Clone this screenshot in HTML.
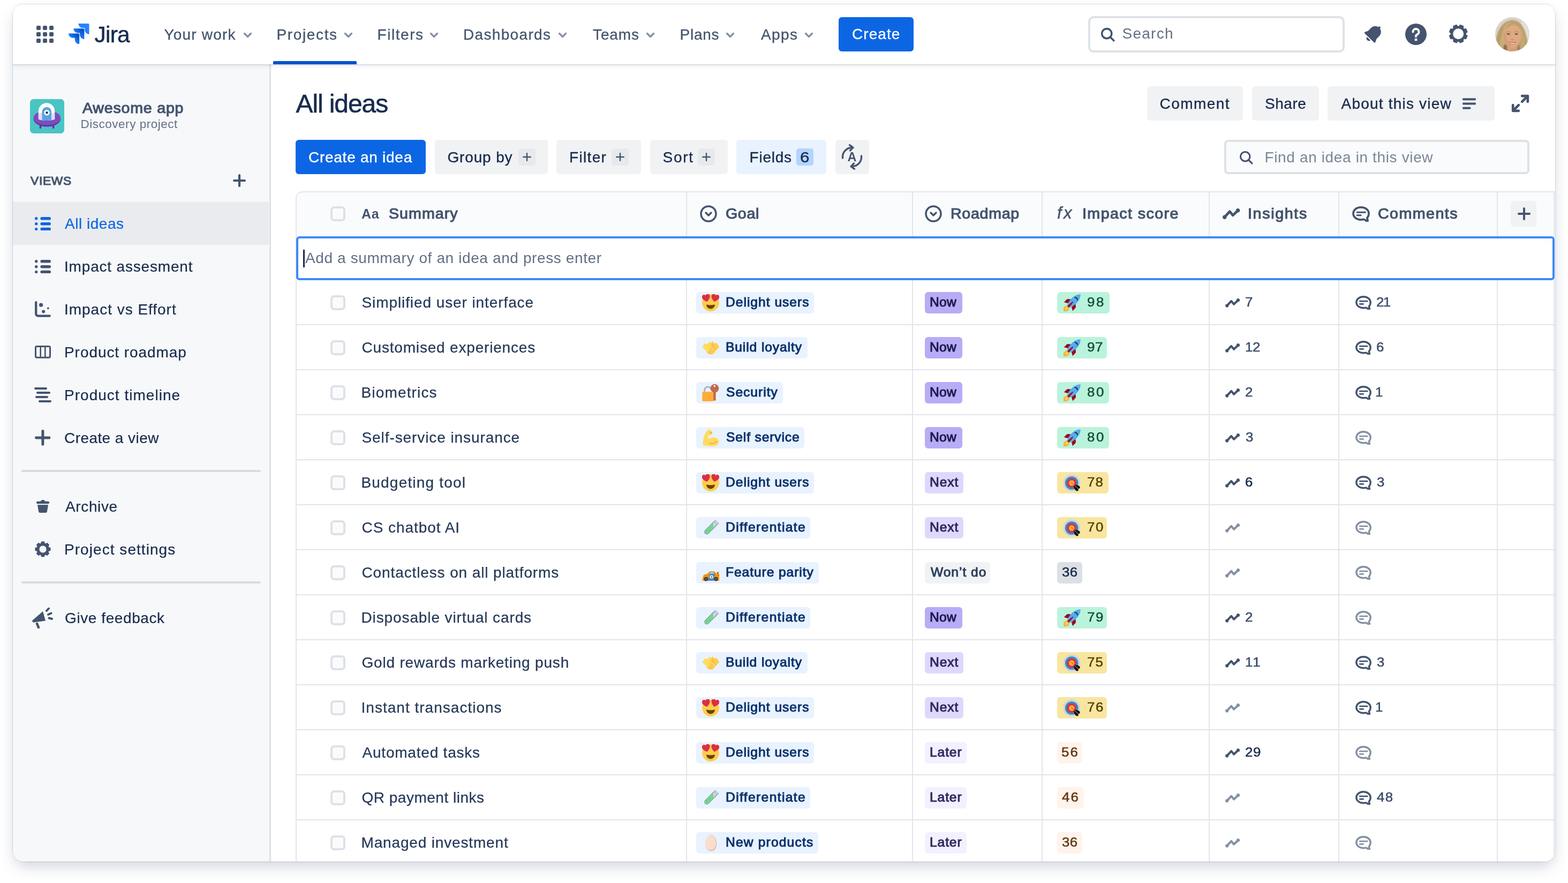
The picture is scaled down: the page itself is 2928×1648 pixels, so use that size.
<!DOCTYPE html><html lang="en"><head><meta charset="utf-8"><title>All ideas - Awesome app - Jira</title><style>
*{box-sizing:border-box;margin:0;padding:0}
html,body{width:2928px;height:1648px;background:#fff;overflow:hidden}
body{font-family:"Liberation Sans",sans-serif;color:#172B4D;position:relative}
.win{position:absolute;left:24px;top:8px;width:2880px;height:1600px;border-radius:20px;background:#fff;overflow:hidden;z-index:2;will-change:transform}
.shadow{position:absolute;left:24px;top:8px;width:2880px;height:1600px;border-radius:20px;box-shadow:0 0 0 1px rgba(9,30,66,.14),0 12px 28px -4px rgba(9,30,66,.2);z-index:1}
.ic{position:absolute;display:block;line-height:0}
.ic svg{display:block;width:100%;height:100%}
.t{position:absolute;white-space:nowrap;height:40px;line-height:40px;font-size:28px}
.nav{position:absolute;left:0;top:0;width:2880px;height:112px;background:#fff;z-index:5;box-shadow:0 1px 0 1px rgba(9,30,66,.10),0 4px 8px 0 rgba(9,30,66,.07)}
.side{position:absolute;left:0;top:112px;width:482px;height:1488px;background:#F7F8F9;border-right:3.5px solid #DFE1E6;z-index:3}
.main{position:absolute;left:480px;top:112px;width:2400px;height:1488px;background:#fff}
.btn{position:absolute;height:64px;border-radius:6px;background:#F1F2F4}
.btn.pri{background:#0C66E4}
.tag{position:absolute;height:40px;border-radius:6px}
.cb{position:absolute;width:28px;height:28px;border:4px solid #DFE1E6;border-radius:7px;background:#FAFBFC}
.hl{position:absolute;left:528px;width:2352px;height:2px;background:#E3E5EA}
.vl{position:absolute;top:350px;width:2px;height:1260px;background:#E3E5EA}
</style></head><body>
<div class="shadow"></div><div class="win">
<div class="main"></div>
<span class="t" style="left:528.5px;top:165.5px;font-size:48px;color:#172B4D;letter-spacing:-1.1px;-webkit-text-stroke:0.6px #172B4D;height:72px;line-height:72px;margin-top:-16px;">All ideas</span>
<div class="btn " style="left:2118px;top:153px;width:179px;"></div>
<span class="t" style="left:2141.5px;top:165.5px;font-size:28px;color:#172B4D;letter-spacing:1.459px;-webkit-text-stroke:0.35px #172B4D;">Comment</span>
<div class="btn " style="left:2314px;top:153px;width:125px;"></div>
<span class="t" style="left:2338.0px;top:165.5px;font-size:28px;color:#172B4D;letter-spacing:0.55px;-webkit-text-stroke:0.35px #172B4D;">Share</span>
<div class="btn " style="left:2455px;top:153px;width:312px;"></div>
<span class="t" style="left:2480.5px;top:165.5px;font-size:28px;color:#172B4D;letter-spacing:1.209px;-webkit-text-stroke:0.35px #172B4D;">About this view</span>
<span class="ic" style="left:2707.0px;top:174.5px;width:25px;height:21px;"><svg width="30" height="25" viewBox="0 0 30 25"  xmlns="http://www.w3.org/2000/svg"><path d="M2.300 2.500h25.400M2.300 12.500h25.400M2.300 22.500h14" stroke="#44546F" stroke-width="4.800" stroke-linecap="round"/></svg></span>
<span class="ic" style="left:2798.0px;top:168.0px;width:34px;height:34px;"><svg width="32" height="32" viewBox="0 0 32 32"  xmlns="http://www.w3.org/2000/svg"><path d="M19 3h10v10M29 3L19 13M13 29H3V19M3 29l10-10" fill="none" stroke="#44546F" stroke-width="4.400" stroke-linecap="round" stroke-linejoin="round"/></svg></span>
<div class="btn pri" style="left:528px;top:253px;width:243px;"></div>
<span class="t" style="left:552.0px;top:265.5px;font-size:28px;color:#fff;letter-spacing:0.733px;-webkit-text-stroke:0.35px #fff;">Create an idea</span>
<div class="btn " style="left:787.6px;top:253px;width:211.69999999999993px;"></div>
<span class="t" style="left:811.5px;top:265.5px;font-size:28px;color:#172B4D;letter-spacing:0.842px;-webkit-text-stroke:0.35px #172B4D;">Group by</span>
<span class="ic" style="left:943.5px;top:269px;width:32px;height:32px;background:#E7E9ED;border-radius:5px"></span><span class="ic" style="left:951.5px;top:277.0px;width:16px;height:16px;"><svg width="16" height="16" viewBox="0 0 16 16"  xmlns="http://www.w3.org/2000/svg"><path d="M8.0 1.2V14.8M1.2 8.0H14.8" stroke="#44546F" stroke-width="2.4" stroke-linecap="round"/></svg></span>
<div class="btn " style="left:1015.3px;top:253px;width:158.0px;"></div>
<span class="t" style="left:1039.0px;top:265.5px;font-size:28px;color:#172B4D;letter-spacing:1.34px;-webkit-text-stroke:0.35px #172B4D;">Filter</span>
<span class="ic" style="left:1117.5px;top:269px;width:32px;height:32px;background:#E7E9ED;border-radius:5px"></span><span class="ic" style="left:1125.5px;top:277.0px;width:16px;height:16px;"><svg width="16" height="16" viewBox="0 0 16 16"  xmlns="http://www.w3.org/2000/svg"><path d="M8.0 1.2V14.8M1.2 8.0H14.8" stroke="#44546F" stroke-width="2.4" stroke-linecap="round"/></svg></span>
<div class="btn " style="left:1189.5px;top:253px;width:145.79999999999995px;"></div>
<span class="t" style="left:1213.5px;top:265.5px;font-size:28px;color:#172B4D;letter-spacing:1.7px;-webkit-text-stroke:0.35px #172B4D;">Sort</span>
<span class="ic" style="left:1279px;top:269px;width:32px;height:32px;background:#E7E9ED;border-radius:5px"></span><span class="ic" style="left:1287.0px;top:277.0px;width:16px;height:16px;"><svg width="16" height="16" viewBox="0 0 16 16"  xmlns="http://www.w3.org/2000/svg"><path d="M8.0 1.2V14.8M1.2 8.0H14.8" stroke="#44546F" stroke-width="2.4" stroke-linecap="round"/></svg></span>
<div class="btn " style="left:1351.3px;top:253px;width:167.9000000000001px;background:#E9F2FF;"></div>
<span class="t" style="left:1375.5px;top:265.5px;font-size:28px;color:#172B4D;letter-spacing:0.78px;-webkit-text-stroke:0.35px #172B4D;">Fields</span>
<span class="ic" style="left:1463px;top:269px;width:32px;height:32px;background:#B3D4FF;border-radius:5px"></span>
<span class="t" style="left:1470.0px;top:265.5px;font-size:28px;color:#172B4D;letter-spacing:0.7px;-webkit-text-stroke:0.4px #172B4D;transform:scaleX(1.12);transform-origin:0 50%;">6</span>
<div class="btn " style="left:1535.5px;top:253px;width:63.700000000000045px;"></div>
<span class="ic" style="left:1545.2px;top:260.4px;width:44px;height:50px;"><svg width="44" height="50" viewBox="0 0 44 50"  xmlns="http://www.w3.org/2000/svg"><path d="M4.500 27A17.600 17.600 0 0 1 22.500 7.500" fill="none" stroke="#44546F" stroke-width="3.400" stroke-linecap="round"/><path d="M17.500 2.700L24 7.400 18.500 13" fill="none" stroke="#44546F" stroke-width="3.400" stroke-linecap="round" stroke-linejoin="round"/><g transform="rotate(180 22 25)"><path d="M4.500 27A17.600 17.600 0 0 1 22.500 7.500" fill="none" stroke="#44546F" stroke-width="3.400" stroke-linecap="round"/><path d="M17.500 2.700L24 7.400 18.500 13" fill="none" stroke="#44546F" stroke-width="3.400" stroke-linecap="round" stroke-linejoin="round"/></g><text x="22" y="33.200" font-family="Liberation Sans, sans-serif" font-weight="700" font-size="23.500" text-anchor="middle" fill="#44546F">A</text></svg></span>
<div style="position:absolute;left:2262px;top:253px;width:570px;height:64px;border:4px solid #DFE1E6;border-radius:7px;background:#FAFBFC"></div>
<span class="ic" style="left:2289.0px;top:272.0px;width:28px;height:28px;"><svg width="28" height="28" viewBox="0 0 32 32"  xmlns="http://www.w3.org/2000/svg"><circle cx="14" cy="14" r="10" fill="none" stroke="#44546F" stroke-width="3.6"/><path d="M21.5 21.5l7 7" stroke="#44546F" stroke-width="3.6" stroke-linecap="round"/></svg></span>
<span class="t" style="left:2337.5px;top:265.5px;font-size:28px;color:#7A869A;letter-spacing:0.635px;">Find an idea in this view</span>
<div style="position:absolute;left:528px;top:349px;width:2400px;height:1300px;border:2px solid #E3E5EA;border-radius:14px 0 0 0;background:#fff"></div>
<div style="position:absolute;left:530px;top:351px;width:2400px;height:81px;background:#FAFBFC;border-radius:12px 0 0 0"></div>
<div class="vl" style="left:1257px"></div>
<div class="vl" style="left:1679px"></div>
<div class="vl" style="left:1921px"></div>
<div class="vl" style="left:2233px"></div>
<div class="vl" style="left:2475px"></div>
<div class="vl" style="left:2771px"></div>
<div class="vl" style="left:2876.5px"></div>
<div class="hl" style="top:597px"></div>
<div class="hl" style="top:681px"></div>
<div class="hl" style="top:765px"></div>
<div class="hl" style="top:849px"></div>
<div class="hl" style="top:933px"></div>
<div class="hl" style="top:1017px"></div>
<div class="hl" style="top:1101px"></div>
<div class="hl" style="top:1185px"></div>
<div class="hl" style="top:1269px"></div>
<div class="hl" style="top:1353px"></div>
<div class="hl" style="top:1437px"></div>
<div class="hl" style="top:1521px"></div>
<div class="hl" style="top:1605px"></div>
<div class="cb" style="left:593.4px;top:377px;"></div>
<span class="t" style="left:651.0px;top:370.5px;font-size:25px;color:#44546F;letter-spacing:0.6px;font-weight:700;">Aa</span>
<span class="t" style="left:702.0px;top:370.5px;font-size:27.0px;color:#44546F;letter-spacing:0.955px;-webkit-text-stroke:1.12px #44546F;transform:scaleX(1.06);transform-origin:0 50%;">Summary</span>
<span class="ic" style="left:1283.0px;top:375.0px;width:32px;height:32px;"><svg width="32" height="32" viewBox="0 0 32 32"  xmlns="http://www.w3.org/2000/svg"><circle cx="16" cy="16" r="14" fill="none" stroke="#44546F" stroke-width="3.500"/><path d="M11 14l5 5 5-5" fill="none" stroke="#44546F" stroke-width="3.500" stroke-linecap="round" stroke-linejoin="round"/></svg></span>
<span class="t" style="left:1331.0px;top:370.5px;font-size:27.0px;color:#44546F;letter-spacing:0.576px;-webkit-text-stroke:1.12px #44546F;transform:scaleX(1.06);transform-origin:0 50%;">Goal</span>
<span class="ic" style="left:1703.4px;top:375.0px;width:32px;height:32px;"><svg width="32" height="32" viewBox="0 0 32 32"  xmlns="http://www.w3.org/2000/svg"><circle cx="16" cy="16" r="14" fill="none" stroke="#44546F" stroke-width="3.500"/><path d="M11 14l5 5 5-5" fill="none" stroke="#44546F" stroke-width="3.500" stroke-linecap="round" stroke-linejoin="round"/></svg></span>
<span class="t" style="left:1751.0px;top:370.5px;font-size:27.0px;color:#44546F;letter-spacing:0.639px;-webkit-text-stroke:1.12px #44546F;transform:scaleX(1.06);transform-origin:0 50%;">Roadmap</span>
<span class="t" style="left:1950.0px;top:369.5px;font-size:31px;color:#44546F;letter-spacing:3.5px;-webkit-text-stroke:0.5px #44546F;font-style:italic;">fx</span>
<span class="t" style="left:1996.5px;top:370.5px;font-size:27.0px;color:#44546F;letter-spacing:1.337px;-webkit-text-stroke:1.12px #44546F;transform:scaleX(1.06);transform-origin:0 50%;">Impact score</span>
<span class="ic" style="left:2259.3px;top:380.6px;width:32.4px;height:20px;"><svg width="32.4" height="20" viewBox="0 0 27.200 16.800"  xmlns="http://www.w3.org/2000/svg"><path d="M3.200 13.600L11.200 4.800 16.100 10.800 24 3.200" fill="none" stroke="#44546F" stroke-width="4" stroke-linecap="round" stroke-linejoin="round"/><circle cx="3.200" cy="13.600" r="3.100" fill="#44546F"/><circle cx="24" cy="3.200" r="3.100" fill="#44546F"/></svg></span>
<span class="t" style="left:2306.0px;top:370.5px;font-size:27.0px;color:#44546F;letter-spacing:1.572px;-webkit-text-stroke:1.12px #44546F;transform:scaleX(1.06);transform-origin:0 50%;">Insights</span>
<span class="ic" style="left:2501.0px;top:377.3px;width:33px;height:29px;"><svg width="33" height="29.04" viewBox="0 0 30 26.400"  xmlns="http://www.w3.org/2000/svg"><path d="M15 1.800C7.500 1.800 1.800 6.300 1.800 12.300S7.500 22.800 15 22.800c1.700 0 3.400-.3 4.900-.7l5 3.200c.8.500 1.700-.2 1.500-1.100l-1.100-4.300c1.900-1.900 2.900-4.500 2.900-7.600C28.200 6.300 22.500 1.800 15 1.800Z" fill="none" stroke="#44546F" stroke-width="3.400" stroke-linejoin="round"/><path d="M8.300 10.200h14M8.300 15.300h6.500" stroke="#44546F" stroke-width="2.800" stroke-linecap="round"/></svg></span>
<span class="t" style="left:2549.0px;top:370.5px;font-size:27.0px;color:#44546F;letter-spacing:1.369px;-webkit-text-stroke:1.12px #44546F;transform:scaleX(1.06);transform-origin:0 50%;">Comments</span>
<span class="ic" style="left:2797px;top:367px;width:48px;height:48px;background:#F1F2F4;border-radius:6px"></span>
<span class="ic" style="left:2809.5px;top:379.0px;width:24px;height:24px;"><svg width="24" height="24" viewBox="0 0 24 24"  xmlns="http://www.w3.org/2000/svg"><path d="M12.0 2.0V22.0M2.0 12.0H22.0" stroke="#44546F" stroke-width="4" stroke-linecap="round"/></svg></span>
<div style="position:absolute;left:528.5px;top:433px;width:2350.3px;height:81.6px;border:4px solid #3D8BF8;border-radius:6px;background:#fff;z-index:2"></div>
<div style="position:absolute;left:542.3px;top:457.5px;width:2.5px;height:33.5px;background:#172B4D;z-index:3"></div>
<span class="t" style="left:546.0px;top:453.5px;font-size:28px;color:#626F86;letter-spacing:0.613px;z-index:3;">Add a summary of an idea and press enter</span>
<div class="cb" style="left:593.4px;top:543px;"></div>
<span class="t" style="left:651.5px;top:536.5px;font-size:28px;color:#253858;letter-spacing:0.908px;-webkit-text-stroke:0.25px #253858;">Simplified user interface</span>
<div class="tag" style="left:1275.5px;top:537px;width:220.0px;background:#E9F2FF"></div>
<span class="ic" style="left:1287.3px;top:541.0px;width:32px;height:32px;"><svg width="32" height="32" viewBox="0 0 32 32"  xmlns="http://www.w3.org/2000/svg"><circle cx="16" cy="16.3" r="15.9" fill="#FFCC4D"/>
<path d="M8.1 19.3C8.1 19.3 11 20.4 16 20.4 21 20.4 23.9 19.3 23.9 19.3 23.9 24 20.5 27.4 16 27.4 11.500 27.4 8.1 24 8.1 19.3Z" fill="#664500"/>
<path d="M0 .92C-.3 .72-1 .2-1-.36-1-.76-.7-.96-.45-.96-.25-.96-.08-.83 0-.66 .08-.83 .25-.96 .45-.96 .7-.96 1-.76 1-.36 1 .2 .3 .72 0 .92Z" fill="#DD2E44" transform="translate(7.8 7.3) rotate(-14) scale(7.5)"/>
<path d="M0 .92C-.3 .72-1 .2-1-.36-1-.76-.7-.96-.45-.96-.25-.96-.08-.83 0-.66 .08-.83 .25-.96 .45-.96 .7-.96 1-.76 1-.36 1 .2 .3 .72 0 .92Z" fill="#DD2E44" transform="translate(24.3 7.3) rotate(14) scale(7.5)"/></svg></span>
<span class="t" style="left:1331.0px;top:536px;font-size:23.2px;color:#09326C;letter-spacing:0.95px;-webkit-text-stroke:0.96px #09326C;transform:scaleX(1.06);transform-origin:0 50%;">Delight users</span>
<div class="tag" style="left:1703.3px;top:537px;width:69.8px;background:#B8ACF6"></div>
<span class="t" style="left:1711.5px;top:536px;font-size:23.2px;color:#1C1B4B;letter-spacing:0.3px;-webkit-text-stroke:0.96px #1C1B4B;transform:scaleX(1.06);transform-origin:0 50%;">Now</span>
<div class="tag" style="left:1949.5px;top:537px;width:98px;background:#BAF3DB"></div>
<span class="ic" style="left:1961.5px;top:541.0px;width:32px;height:32px;"><svg width="32" height="32" viewBox="0 0 32 32"  xmlns="http://www.w3.org/2000/svg"><g transform="translate(19.500 12.500) rotate(45)">
<path d="M0 13C3 14 5 17 4.800 21 4.500 24 2 26 0 27.500-2 26-4.500 24-4.800 21-5 17-3 14 0 13Z" fill="#FFAC33"/>
<path d="M0 14C1.800 15 3 17 2.800 19.500 2.600 21.500 1.200 23 0 24-1.200 23-2.600 21.500-2.800 19.500-3 17-1.800 15 0 14Z" fill="#FFCC4D"/>
<path d="M-5.500 1.500L-10.200 5.200C-11 6-11.500 7-11.500 8L-11.400 15-5 11.500ZM5.500 1.500L10.200 5.200C11 6 11.500 7 11.500 8L11.400 15 5 11.500Z" fill="#A0041E"/>
<path d="M0-17.300C4-13.500 6.600-7 6.500 0 6.400 6 5 11 3.300 14.800H-3.300C-5 11-6.400 6-6.500 0-6.600-7-4-13.500 0-17.300Z" fill="#55ACEE"/>
<path d="M0 1.500C1.300 4 1.900 9 1.600 16H-1.600C-1.900 9-1.300 4 0 1.500Z" fill="#A0041E"/>
<path d="M-3.700-5.200C-2-8.400 2-8.400 3.700-5.200 1.800-7 -1.800-7 -3.700-5.200Z" fill="#111" stroke="#111" stroke-width=".9" stroke-linejoin="round"/>
</g></svg></span>
<span class="t" style="left:2005.5px;top:536px;font-size:23.5px;color:#164B35;letter-spacing:2.4px;-webkit-text-stroke:0.5px #164B35;transform:scaleX(1.1);transform-origin:0 50%;">98</span>
<span class="ic" style="left:2263.5px;top:549.3px;width:27.2px;height:16.8px;"><svg width="27.2" height="16.8" viewBox="0 0 27.200 16.800"  xmlns="http://www.w3.org/2000/svg"><path d="M3.200 13.600L11.200 4.800 16.100 10.800 24 3.200" fill="none" stroke="#44546F" stroke-width="4" stroke-linecap="round" stroke-linejoin="round"/><circle cx="3.200" cy="13.600" r="3.100" fill="#44546F"/><circle cx="24" cy="3.200" r="3.100" fill="#44546F"/></svg></span>
<span class="t" style="left:2301.3px;top:536px;font-size:23.5px;color:#3A4B69;letter-spacing:0.6px;-webkit-text-stroke:0.5px #3A4B69;transform:scaleX(1.1);transform-origin:0 50%;">7</span>
<span class="ic" style="left:2506.5px;top:543.8px;width:30px;height:26.4px;"><svg width="30" height="26.4" viewBox="0 0 30 26.400"  xmlns="http://www.w3.org/2000/svg"><path d="M15 1.800C7.500 1.800 1.800 6.300 1.800 12.300S7.500 22.800 15 22.800c1.700 0 3.400-.3 4.900-.7l5 3.200c.8.500 1.700-.2 1.500-1.100l-1.100-4.300c1.900-1.900 2.900-4.500 2.900-7.600C28.200 6.300 22.500 1.800 15 1.800Z" fill="none" stroke="#44546F" stroke-width="3.400" stroke-linejoin="round"/><path d="M8.300 10.200h14M8.300 15.300h6.500" stroke="#44546F" stroke-width="2.800" stroke-linecap="round"/></svg></span>
<span class="t" style="left:2545.5px;top:536px;font-size:23.5px;color:#3A4B69;letter-spacing:-1.4px;-webkit-text-stroke:0.5px #3A4B69;transform:scaleX(1.1);transform-origin:0 50%;">21</span>
<div class="cb" style="left:593.4px;top:627px;"></div>
<span class="t" style="left:651.5px;top:620.5px;font-size:28px;color:#253858;letter-spacing:0.815px;-webkit-text-stroke:0.25px #253858;">Customised experiences</span>
<div class="tag" style="left:1275.5px;top:621px;width:208.2px;background:#E9F2FF"></div>
<span class="ic" style="left:1287.3px;top:625.0px;width:32px;height:32px;"><svg width="32" height="32" viewBox="0 0 32 32"  xmlns="http://www.w3.org/2000/svg"><path d="M.9 14.8L5 8.6 9.9 9.500 13.7 5.2 16.8 7.3 19.9 4.8 21.7 8 27.3 8 31.7 14.8 24.8 21.6 24.500 24.1 21.7 26 19.9 27.8 16.1 28.1 11.2 26.9 8.7 24.100 8.100 21.600Z" fill="#FFDC5D" stroke="#FFDC5D" stroke-width="1" stroke-linejoin="round"/>
<path d="M16.8 7.3L19.9 4.8 21.7 8 27.3 8 31.7 14.8 25.5 20.9 17.2 11.2Z" fill="#FFCC4D" stroke="#FFCC4D" stroke-width="1" stroke-linejoin="round"/>
<path d="M17.500 11.500l8 9M15.500 17.500l7.500 5.500M14.200 20l7 5.200M12.700 22.500l6.500 4.700M11 24.800l5.200 3M18.500 9.800l3.500 2.700" stroke="#EF9645" stroke-width="1" fill="none" stroke-linecap="round"/></svg></span>
<span class="t" style="left:1331.0px;top:620px;font-size:23.2px;color:#09326C;letter-spacing:0.854px;-webkit-text-stroke:0.96px #09326C;transform:scaleX(1.06);transform-origin:0 50%;">Build loyalty</span>
<div class="tag" style="left:1703.3px;top:621px;width:69.8px;background:#B8ACF6"></div>
<span class="t" style="left:1711.5px;top:620px;font-size:23.2px;color:#1C1B4B;letter-spacing:0.3px;-webkit-text-stroke:0.96px #1C1B4B;transform:scaleX(1.06);transform-origin:0 50%;">Now</span>
<div class="tag" style="left:1949.5px;top:621px;width:93.7px;background:#BAF3DB"></div>
<span class="ic" style="left:1961.5px;top:625.0px;width:32px;height:32px;"><svg width="32" height="32" viewBox="0 0 32 32"  xmlns="http://www.w3.org/2000/svg"><g transform="translate(19.500 12.500) rotate(45)">
<path d="M0 13C3 14 5 17 4.800 21 4.500 24 2 26 0 27.500-2 26-4.500 24-4.800 21-5 17-3 14 0 13Z" fill="#FFAC33"/>
<path d="M0 14C1.800 15 3 17 2.800 19.500 2.600 21.500 1.200 23 0 24-1.200 23-2.600 21.500-2.800 19.500-3 17-1.800 15 0 14Z" fill="#FFCC4D"/>
<path d="M-5.500 1.500L-10.200 5.200C-11 6-11.500 7-11.500 8L-11.400 15-5 11.500ZM5.500 1.500L10.200 5.200C11 6 11.500 7 11.500 8L11.400 15 5 11.500Z" fill="#A0041E"/>
<path d="M0-17.300C4-13.500 6.600-7 6.500 0 6.400 6 5 11 3.300 14.800H-3.300C-5 11-6.400 6-6.500 0-6.600-7-4-13.500 0-17.300Z" fill="#55ACEE"/>
<path d="M0 1.500C1.300 4 1.900 9 1.600 16H-1.600C-1.900 9-1.300 4 0 1.500Z" fill="#A0041E"/>
<path d="M-3.700-5.200C-2-8.400 2-8.400 3.700-5.200 1.800-7 -1.800-7 -3.700-5.200Z" fill="#111" stroke="#111" stroke-width=".9" stroke-linejoin="round"/>
</g></svg></span>
<span class="t" style="left:2005.5px;top:620px;font-size:23.5px;color:#164B35;letter-spacing:0.6px;-webkit-text-stroke:0.5px #164B35;transform:scaleX(1.1);transform-origin:0 50%;">97</span>
<span class="ic" style="left:2263.5px;top:633.3px;width:27.2px;height:16.8px;"><svg width="27.2" height="16.8" viewBox="0 0 27.200 16.800"  xmlns="http://www.w3.org/2000/svg"><path d="M3.200 13.600L11.200 4.800 16.100 10.800 24 3.200" fill="none" stroke="#44546F" stroke-width="4" stroke-linecap="round" stroke-linejoin="round"/><circle cx="3.200" cy="13.600" r="3.100" fill="#44546F"/><circle cx="24" cy="3.200" r="3.100" fill="#44546F"/></svg></span>
<span class="t" style="left:2300.5px;top:620px;font-size:23.5px;color:#3A4B69;letter-spacing:-0.3px;-webkit-text-stroke:0.5px #3A4B69;transform:scaleX(1.1);transform-origin:0 50%;">12</span>
<span class="ic" style="left:2506.5px;top:627.8px;width:30px;height:26.4px;"><svg width="30" height="26.4" viewBox="0 0 30 26.400"  xmlns="http://www.w3.org/2000/svg"><path d="M15 1.800C7.500 1.800 1.800 6.300 1.800 12.300S7.500 22.800 15 22.800c1.700 0 3.400-.3 4.900-.7l5 3.200c.8.500 1.700-.2 1.500-1.100l-1.100-4.300c1.900-1.900 2.900-4.500 2.900-7.600C28.200 6.300 22.500 1.800 15 1.800Z" fill="none" stroke="#44546F" stroke-width="3.400" stroke-linejoin="round"/><path d="M8.300 10.200h14M8.300 15.300h6.500" stroke="#44546F" stroke-width="2.800" stroke-linecap="round"/></svg></span>
<span class="t" style="left:2545.5px;top:620px;font-size:23.5px;color:#3A4B69;letter-spacing:0.6px;-webkit-text-stroke:0.5px #3A4B69;transform:scaleX(1.1);transform-origin:0 50%;">6</span>
<div class="cb" style="left:593.4px;top:711px;"></div>
<span class="t" style="left:650.5px;top:704.5px;font-size:28px;color:#253858;letter-spacing:1.154px;-webkit-text-stroke:0.25px #253858;">Biometrics</span>
<div class="tag" style="left:1275.5px;top:705px;width:162.3px;background:#E9F2FF"></div>
<span class="ic" style="left:1287.3px;top:709.0px;width:32px;height:32px;"><svg width="32" height="32" viewBox="0 0 32 32"  xmlns="http://www.w3.org/2000/svg"><path d="M4.500 16V11.500a6.500 6.500 0 0 1 13 0" fill="none" stroke="#AAB8C2" stroke-width="3.200"/>
<rect x=".3" y="14.200" width="21.600" height="18" rx="2.800" fill="#FFAC33"/>
<circle cx="23.500" cy="7.700" r="7.800" fill="#C1694F"/>
<path d="M21.100 13h4.700v5.500l-.9.900.9.900v1.600l-.9.900.9.900v1.600l-.9.900.9.900v2.200l-2.300 2.200-2.400-2.200z" fill="#C1694F"/>
<circle cx="23.300" cy="3.600" r="1.800" fill="#fff"/></svg></span>
<span class="t" style="left:1332.0px;top:704px;font-size:23.2px;color:#09326C;letter-spacing:0.947px;-webkit-text-stroke:0.96px #09326C;transform:scaleX(1.06);transform-origin:0 50%;">Security</span>
<div class="tag" style="left:1703.3px;top:705px;width:69.8px;background:#B8ACF6"></div>
<span class="t" style="left:1711.5px;top:704px;font-size:23.2px;color:#1C1B4B;letter-spacing:0.3px;-webkit-text-stroke:0.96px #1C1B4B;transform:scaleX(1.06);transform-origin:0 50%;">Now</span>
<div class="tag" style="left:1949.5px;top:705px;width:97.9px;background:#BAF3DB"></div>
<span class="ic" style="left:1961.5px;top:709.0px;width:32px;height:32px;"><svg width="32" height="32" viewBox="0 0 32 32"  xmlns="http://www.w3.org/2000/svg"><g transform="translate(19.500 12.500) rotate(45)">
<path d="M0 13C3 14 5 17 4.800 21 4.500 24 2 26 0 27.500-2 26-4.500 24-4.800 21-5 17-3 14 0 13Z" fill="#FFAC33"/>
<path d="M0 14C1.800 15 3 17 2.800 19.500 2.600 21.500 1.200 23 0 24-1.200 23-2.600 21.500-2.800 19.500-3 17-1.800 15 0 14Z" fill="#FFCC4D"/>
<path d="M-5.500 1.500L-10.200 5.200C-11 6-11.500 7-11.500 8L-11.400 15-5 11.500ZM5.500 1.500L10.200 5.200C11 6 11.500 7 11.500 8L11.400 15 5 11.500Z" fill="#A0041E"/>
<path d="M0-17.300C4-13.500 6.600-7 6.500 0 6.400 6 5 11 3.300 14.800H-3.300C-5 11-6.400 6-6.500 0-6.600-7-4-13.500 0-17.300Z" fill="#55ACEE"/>
<path d="M0 1.500C1.300 4 1.900 9 1.600 16H-1.600C-1.900 9-1.300 4 0 1.500Z" fill="#A0041E"/>
<path d="M-3.700-5.200C-2-8.400 2-8.400 3.700-5.200 1.800-7 -1.800-7 -3.700-5.200Z" fill="#111" stroke="#111" stroke-width=".9" stroke-linejoin="round"/>
</g></svg></span>
<span class="t" style="left:2005.5px;top:704px;font-size:23.5px;color:#164B35;letter-spacing:2.4px;-webkit-text-stroke:0.5px #164B35;transform:scaleX(1.1);transform-origin:0 50%;">80</span>
<span class="ic" style="left:2263.5px;top:717.3px;width:27.2px;height:16.8px;"><svg width="27.2" height="16.8" viewBox="0 0 27.200 16.800"  xmlns="http://www.w3.org/2000/svg"><path d="M3.200 13.600L11.200 4.800 16.100 10.800 24 3.200" fill="none" stroke="#44546F" stroke-width="4" stroke-linecap="round" stroke-linejoin="round"/><circle cx="3.200" cy="13.600" r="3.100" fill="#44546F"/><circle cx="24" cy="3.200" r="3.100" fill="#44546F"/></svg></span>
<span class="t" style="left:2301.3px;top:704px;font-size:23.5px;color:#3A4B69;letter-spacing:0.6px;-webkit-text-stroke:0.5px #3A4B69;transform:scaleX(1.1);transform-origin:0 50%;">2</span>
<span class="ic" style="left:2506.5px;top:711.8px;width:30px;height:26.4px;"><svg width="30" height="26.4" viewBox="0 0 30 26.400"  xmlns="http://www.w3.org/2000/svg"><path d="M15 1.800C7.500 1.800 1.800 6.300 1.800 12.300S7.500 22.800 15 22.800c1.700 0 3.400-.3 4.900-.7l5 3.200c.8.500 1.700-.2 1.500-1.100l-1.100-4.300c1.900-1.900 2.900-4.500 2.900-7.600C28.200 6.300 22.500 1.800 15 1.800Z" fill="none" stroke="#44546F" stroke-width="3.400" stroke-linejoin="round"/><path d="M8.300 10.200h14M8.300 15.300h6.500" stroke="#44546F" stroke-width="2.800" stroke-linecap="round"/></svg></span>
<span class="t" style="left:2543.7px;top:704px;font-size:23.5px;color:#3A4B69;letter-spacing:0.6px;-webkit-text-stroke:0.5px #3A4B69;transform:scaleX(1.1);transform-origin:0 50%;">1</span>
<div class="cb" style="left:593.4px;top:795px;"></div>
<span class="t" style="left:651.5px;top:788.5px;font-size:28px;color:#253858;letter-spacing:0.915px;-webkit-text-stroke:0.25px #253858;">Self-service insurance</span>
<div class="tag" style="left:1275.5px;top:789px;width:202.7px;background:#E9F2FF"></div>
<span class="ic" style="left:1287.3px;top:793.0px;width:32px;height:32px;"><svg width="32" height="32" viewBox="0 0 32 32"  xmlns="http://www.w3.org/2000/svg"><path d="M1.200 29.500C1.500 18 5 6.500 11.500 .8 12.500 0 13.500 .3 14.500 .9 16.500 2.200 18.500 3.600 19.600 5.500 19 6.600 18 7.500 18.400 8.500 19.200 9.300 18.800 10.800 17.600 11 15.500 10.600 13 11 12 12.500 11 14.500 10.800 16.500 11 18.300 13.500 16.300 17.500 15.200 21.500 15.200 27.500 15.400 31.800 19.500 31.700 24 31.600 29 26 32 18 32 12 32 6 30.800 1.200 29.500Z" fill="#FFDC5D"/>
<path d="M13.700 25.600C18 27.800 24.500 27.200 27 22.300M15.300 5.500c.3 1.300 1.300 2 2.600 2" fill="none" stroke="#EF9645" stroke-width="1.400" stroke-linecap="round"/></svg></span>
<span class="t" style="left:1332.0px;top:788px;font-size:23.2px;color:#09326C;letter-spacing:0.83px;-webkit-text-stroke:0.96px #09326C;transform:scaleX(1.06);transform-origin:0 50%;">Self service</span>
<div class="tag" style="left:1703.3px;top:789px;width:69.8px;background:#B8ACF6"></div>
<span class="t" style="left:1711.5px;top:788px;font-size:23.2px;color:#1C1B4B;letter-spacing:0.3px;-webkit-text-stroke:0.96px #1C1B4B;transform:scaleX(1.06);transform-origin:0 50%;">Now</span>
<div class="tag" style="left:1949.5px;top:789px;width:97.9px;background:#BAF3DB"></div>
<span class="ic" style="left:1961.5px;top:793.0px;width:32px;height:32px;"><svg width="32" height="32" viewBox="0 0 32 32"  xmlns="http://www.w3.org/2000/svg"><g transform="translate(19.500 12.500) rotate(45)">
<path d="M0 13C3 14 5 17 4.800 21 4.500 24 2 26 0 27.500-2 26-4.500 24-4.800 21-5 17-3 14 0 13Z" fill="#FFAC33"/>
<path d="M0 14C1.800 15 3 17 2.800 19.500 2.600 21.500 1.200 23 0 24-1.200 23-2.600 21.500-2.800 19.500-3 17-1.800 15 0 14Z" fill="#FFCC4D"/>
<path d="M-5.500 1.500L-10.200 5.200C-11 6-11.500 7-11.500 8L-11.400 15-5 11.500ZM5.500 1.500L10.200 5.200C11 6 11.500 7 11.500 8L11.400 15 5 11.500Z" fill="#A0041E"/>
<path d="M0-17.300C4-13.500 6.600-7 6.500 0 6.400 6 5 11 3.300 14.800H-3.300C-5 11-6.400 6-6.500 0-6.600-7-4-13.500 0-17.300Z" fill="#55ACEE"/>
<path d="M0 1.500C1.300 4 1.900 9 1.600 16H-1.600C-1.900 9-1.300 4 0 1.500Z" fill="#A0041E"/>
<path d="M-3.700-5.200C-2-8.400 2-8.400 3.700-5.200 1.800-7 -1.800-7 -3.700-5.200Z" fill="#111" stroke="#111" stroke-width=".9" stroke-linejoin="round"/>
</g></svg></span>
<span class="t" style="left:2005.5px;top:788px;font-size:23.5px;color:#164B35;letter-spacing:2.4px;-webkit-text-stroke:0.5px #164B35;transform:scaleX(1.1);transform-origin:0 50%;">80</span>
<span class="ic" style="left:2263.5px;top:801.3px;width:27.2px;height:16.8px;"><svg width="27.2" height="16.8" viewBox="0 0 27.200 16.800"  xmlns="http://www.w3.org/2000/svg"><path d="M3.200 13.600L11.200 4.800 16.100 10.800 24 3.200" fill="none" stroke="#44546F" stroke-width="4" stroke-linecap="round" stroke-linejoin="round"/><circle cx="3.200" cy="13.600" r="3.100" fill="#44546F"/><circle cx="24" cy="3.200" r="3.100" fill="#44546F"/></svg></span>
<span class="t" style="left:2302.3px;top:788px;font-size:23.5px;color:#3A4B69;letter-spacing:0.6px;-webkit-text-stroke:0.5px #3A4B69;transform:scaleX(1.1);transform-origin:0 50%;">3</span>
<span class="ic" style="left:2506.5px;top:795.8px;width:30px;height:26.4px;"><svg width="30" height="26.4" viewBox="0 0 30 26.400"  xmlns="http://www.w3.org/2000/svg"><path d="M15 1.800C7.500 1.800 1.800 6.300 1.800 12.300S7.500 22.800 15 22.800c1.700 0 3.400-.3 4.900-.7l5 3.200c.8.500 1.700-.2 1.500-1.100l-1.100-4.300c1.900-1.900 2.900-4.500 2.900-7.600C28.200 6.300 22.500 1.800 15 1.800Z" fill="none" stroke="#8590A2" stroke-width="3.400" stroke-linejoin="round"/><path d="M8.300 10.200h14M8.300 15.300h6.500" stroke="#8590A2" stroke-width="2.800" stroke-linecap="round"/></svg></span>
<div class="cb" style="left:593.4px;top:879px;"></div>
<span class="t" style="left:650.5px;top:872.5px;font-size:28px;color:#253858;letter-spacing:1.184px;-webkit-text-stroke:0.25px #253858;">Budgeting tool</span>
<div class="tag" style="left:1275.5px;top:873px;width:220.0px;background:#E9F2FF"></div>
<span class="ic" style="left:1287.3px;top:877.0px;width:32px;height:32px;"><svg width="32" height="32" viewBox="0 0 32 32"  xmlns="http://www.w3.org/2000/svg"><circle cx="16" cy="16.3" r="15.9" fill="#FFCC4D"/>
<path d="M8.1 19.3C8.1 19.3 11 20.4 16 20.4 21 20.4 23.9 19.3 23.9 19.3 23.9 24 20.5 27.4 16 27.4 11.500 27.4 8.1 24 8.1 19.3Z" fill="#664500"/>
<path d="M0 .92C-.3 .72-1 .2-1-.36-1-.76-.7-.96-.45-.96-.25-.96-.08-.83 0-.66 .08-.83 .25-.96 .45-.96 .7-.96 1-.76 1-.36 1 .2 .3 .72 0 .92Z" fill="#DD2E44" transform="translate(7.8 7.3) rotate(-14) scale(7.5)"/>
<path d="M0 .92C-.3 .72-1 .2-1-.36-1-.76-.7-.96-.45-.96-.25-.96-.08-.83 0-.66 .08-.83 .25-.96 .45-.96 .7-.96 1-.76 1-.36 1 .2 .3 .72 0 .92Z" fill="#DD2E44" transform="translate(24.3 7.3) rotate(14) scale(7.5)"/></svg></span>
<span class="t" style="left:1331.0px;top:872px;font-size:23.2px;color:#09326C;letter-spacing:0.95px;-webkit-text-stroke:0.96px #09326C;transform:scaleX(1.06);transform-origin:0 50%;">Delight users</span>
<div class="tag" style="left:1703.3px;top:873px;width:71.7px;background:#DFD8FD"></div>
<span class="t" style="left:1711.5px;top:872px;font-size:23.2px;color:#2E2960;letter-spacing:0.864px;-webkit-text-stroke:0.96px #2E2960;transform:scaleX(1.06);transform-origin:0 50%;">Next</span>
<div class="tag" style="left:1949.5px;top:873px;width:96.1px;background:#F8E6A0"></div>
<span class="ic" style="left:1961.5px;top:877.0px;width:32px;height:32px;"><svg width="32" height="32" viewBox="0 0 32 32"  xmlns="http://www.w3.org/2000/svg"><circle cx="15.200" cy="16.500" r="16" fill="#CCD6DD"/>
<circle cx="15.200" cy="16.500" r="12.300" fill="#3B88C3"/>
<circle cx="15.200" cy="16.500" r="8.850" fill="#DD2E44"/>
<circle cx="15.200" cy="16.500" r="5.300" fill="#FFAC33"/>
<path d="M20 20C22 19.200 25.500 19.800 29 22 31 23.300 31.400 25 30.200 26.200L27.500 27.800C28.200 30 27.500 31.300 25.800 31.500 23.500 31.500 21 29 19.800 25.500 19.200 23.500 19.200 21.500 20 20Z" fill="#111"/>
<path d="M14.500 15L28 28" stroke="#C1694F" stroke-width="1.100" stroke-linecap="round"/></svg></span>
<span class="t" style="left:2005.5px;top:872px;font-size:23.5px;color:#533F04;letter-spacing:1.0px;-webkit-text-stroke:0.5px #533F04;transform:scaleX(1.1);transform-origin:0 50%;">78</span>
<span class="ic" style="left:2263.5px;top:885.3px;width:27.2px;height:16.8px;"><svg width="27.2" height="16.8" viewBox="0 0 27.200 16.800"  xmlns="http://www.w3.org/2000/svg"><path d="M3.200 13.600L11.200 4.800 16.100 10.800 24 3.200" fill="none" stroke="#44546F" stroke-width="4" stroke-linecap="round" stroke-linejoin="round"/><circle cx="3.200" cy="13.600" r="3.100" fill="#44546F"/><circle cx="24" cy="3.200" r="3.100" fill="#44546F"/></svg></span>
<span class="t" style="left:2301.3px;top:872px;font-size:23.5px;color:#172B4D;letter-spacing:0.6px;-webkit-text-stroke:0.5px #172B4D;transform:scaleX(1.1);transform-origin:0 50%;">6</span>
<span class="ic" style="left:2506.5px;top:879.8px;width:30px;height:26.4px;"><svg width="30" height="26.4" viewBox="0 0 30 26.400"  xmlns="http://www.w3.org/2000/svg"><path d="M15 1.800C7.500 1.800 1.800 6.300 1.800 12.300S7.500 22.800 15 22.800c1.700 0 3.400-.3 4.900-.7l5 3.200c.8.500 1.700-.2 1.500-1.100l-1.100-4.300c1.900-1.900 2.900-4.500 2.900-7.600C28.200 6.300 22.500 1.800 15 1.800Z" fill="none" stroke="#44546F" stroke-width="3.400" stroke-linejoin="round"/><path d="M8.300 10.200h14M8.300 15.300h6.500" stroke="#44546F" stroke-width="2.800" stroke-linecap="round"/></svg></span>
<span class="t" style="left:2546.5px;top:872px;font-size:23.5px;color:#3A4B69;letter-spacing:0.6px;-webkit-text-stroke:0.5px #3A4B69;transform:scaleX(1.1);transform-origin:0 50%;">3</span>
<div class="cb" style="left:593.4px;top:963px;"></div>
<span class="t" style="left:651.5px;top:956.5px;font-size:28px;color:#253858;letter-spacing:0.95px;-webkit-text-stroke:0.25px #253858;">CS chatbot AI</span>
<div class="tag" style="left:1275.5px;top:957px;width:213.1px;background:#E9F2FF"></div>
<span class="ic" style="left:1287.3px;top:961.0px;width:32px;height:32px;"><svg width="32" height="32" viewBox="0 0 32 32"  xmlns="http://www.w3.org/2000/svg"><g transform="translate(16.600 16) rotate(45)">
<rect x="-4.750" y="-15.500" width="9.500" height="31.200" rx="4.750" fill="#8899A6"/>
<rect x="-3.200" y="-14.500" width="6.400" height="28.600" rx="3.200" fill="#CCD6DD"/>
<path d="M-3.200 -7.800C-1.500 -6.200 1 -5 3.200 -1.700V10.900a3.200 3.200 0 0 1-6.400 0Z" fill="#6FE08A"/>
<path d="M-3.200 -7.800C-1.500 -6.200 1 -5 3.200 -1.700 1 -3.700 -1.500 -5.500 -3.200 -6.600Z" fill="#3BC860"/>
<ellipse cx="0" cy="-14.700" rx="5.200" ry="1.700" fill="#8899A6"/>
<ellipse cx="0" cy="-14.700" rx="4" ry="1" fill="#E1E8ED"/>
<circle cx="-.5" cy="9.800" r="1.200" fill="#3BC860"/><circle cx="1" cy="4" r="1" fill="#3BC860"/><circle cx="-1.200" cy="1" r=".7" fill="#3BC860"/><circle cx="1.300" cy="-1" r=".6" fill="#3BC860"/><circle cx="-1" cy="5.500" r=".6" fill="#3BC860"/>
</g></svg></span>
<span class="t" style="left:1331.0px;top:956px;font-size:23.2px;color:#09326C;letter-spacing:1.307px;-webkit-text-stroke:0.96px #09326C;transform:scaleX(1.06);transform-origin:0 50%;">Differentiate</span>
<div class="tag" style="left:1703.3px;top:957px;width:71.7px;background:#DFD8FD"></div>
<span class="t" style="left:1711.5px;top:956px;font-size:23.2px;color:#2E2960;letter-spacing:0.864px;-webkit-text-stroke:0.96px #2E2960;transform:scaleX(1.06);transform-origin:0 50%;">Next</span>
<div class="tag" style="left:1949.5px;top:957px;width:93.8px;background:#F8E6A0"></div>
<span class="ic" style="left:1961.5px;top:961.0px;width:32px;height:32px;"><svg width="32" height="32" viewBox="0 0 32 32"  xmlns="http://www.w3.org/2000/svg"><circle cx="15.200" cy="16.500" r="16" fill="#CCD6DD"/>
<circle cx="15.200" cy="16.500" r="12.300" fill="#3B88C3"/>
<circle cx="15.200" cy="16.500" r="8.850" fill="#DD2E44"/>
<circle cx="15.200" cy="16.500" r="5.300" fill="#FFAC33"/>
<path d="M20 20C22 19.200 25.500 19.800 29 22 31 23.300 31.400 25 30.200 26.200L27.500 27.800C28.200 30 27.500 31.300 25.800 31.500 23.500 31.500 21 29 19.800 25.500 19.200 23.500 19.200 21.500 20 20Z" fill="#111"/>
<path d="M14.500 15L28 28" stroke="#C1694F" stroke-width="1.100" stroke-linecap="round"/></svg></span>
<span class="t" style="left:2005.5px;top:956px;font-size:23.5px;color:#533F04;letter-spacing:1.4px;-webkit-text-stroke:0.5px #533F04;transform:scaleX(1.1);transform-origin:0 50%;">70</span>
<span class="ic" style="left:2263.5px;top:969.3px;width:27.2px;height:16.8px;"><svg width="27.2" height="16.8" viewBox="0 0 27.200 16.800"  xmlns="http://www.w3.org/2000/svg"><path d="M3.200 13.600L11.200 4.800 16.100 10.800 24 3.200" fill="none" stroke="#8590A2" stroke-width="4" stroke-linecap="round" stroke-linejoin="round"/><circle cx="3.200" cy="13.600" r="3.100" fill="#8590A2"/><circle cx="24" cy="3.200" r="3.100" fill="#8590A2"/></svg></span>
<span class="ic" style="left:2506.5px;top:963.8px;width:30px;height:26.4px;"><svg width="30" height="26.4" viewBox="0 0 30 26.400"  xmlns="http://www.w3.org/2000/svg"><path d="M15 1.800C7.500 1.800 1.800 6.300 1.800 12.300S7.500 22.800 15 22.800c1.700 0 3.400-.3 4.900-.7l5 3.200c.8.500 1.700-.2 1.500-1.100l-1.100-4.300c1.900-1.900 2.900-4.500 2.900-7.600C28.200 6.300 22.500 1.800 15 1.800Z" fill="none" stroke="#8590A2" stroke-width="3.400" stroke-linejoin="round"/><path d="M8.300 10.200h14M8.300 15.300h6.500" stroke="#8590A2" stroke-width="2.800" stroke-linecap="round"/></svg></span>
<div class="cb" style="left:593.4px;top:1047px;"></div>
<span class="t" style="left:651.5px;top:1040.5px;font-size:28px;color:#253858;letter-spacing:0.882px;-webkit-text-stroke:0.25px #253858;">Contactless on all platforms</span>
<div class="tag" style="left:1275.5px;top:1041px;width:229.7px;background:#E9F2FF"></div>
<span class="ic" style="left:1287.3px;top:1045.0px;width:32px;height:32px;"><svg width="32" height="32" viewBox="0 0 32 32"  xmlns="http://www.w3.org/2000/svg"><path d="M27 15.200l4.800-1.500.5 1-3.800 2.300z" fill="#F4900C"/><rect x="28.300" y="15.800" width="2.200" height="1.800" fill="#292F33"/>
<path d="M.2 30.600L2.200 21.200C2.600 20 3.500 19.500 5 19.200L9.500 18.300 14 13.800C14.500 13.300 15 13.200 15.600 13.200H22C22.700 13.200 23.200 13.500 23.600 14L26.500 17.300 30.500 17.600C31.500 17.700 32.200 18.400 32.300 19.500L32.600 29.500C32.600 30.300 32 30.800 31.300 30.800H1C.4 30.800.1 30.700.2 30.600Z" fill="#F4900C"/>
<path d="M14.200 18.300H24L21.600 30.800H10.600Z" fill="#3B88C3"/>
<path d="M12.500 18.100L15.600 14.800H21.600L22.300 18.100Z" fill="#88C9F9"/>
<path d="M30.500 20.500l1.800-1.700.2 4z" fill="#DD2E44"/>
<path d="M1.800 21.800l2.800-.5-.4 1.200-2.600.3z" fill="#FFCC4D"/>
<circle cx="17.500" cy="23.800" r="3.300" fill="#fff"/>
<text x="17.500" y="26" font-family="Liberation Sans, sans-serif" font-size="6" font-weight="700" text-anchor="middle" fill="#292F33">3</text>
<circle cx="7.300" cy="27.700" r="3.700" fill="#292F33"/><circle cx="7.300" cy="27.700" r="2.200" fill="#66605A"/>
<circle cx="26" cy="27.700" r="3.700" fill="#292F33"/><circle cx="26" cy="27.700" r="2.200" fill="#66605A"/></svg></span>
<span class="t" style="left:1331.0px;top:1040px;font-size:23.2px;color:#09326C;letter-spacing:0.881px;-webkit-text-stroke:0.96px #09326C;transform:scaleX(1.06);transform-origin:0 50%;">Feature parity</span>
<div class="tag" style="left:1703.3px;top:1041px;width:121.5px;background:#F1F2F4"></div>
<span class="t" style="left:1713.5px;top:1040px;font-size:23.2px;color:#2C3E5D;letter-spacing:0.915px;-webkit-text-stroke:0.96px #2C3E5D;transform:scaleX(1.06);transform-origin:0 50%;">Won’t do</span>
<div class="tag" style="left:1949.5px;top:1041px;width:47.7px;background:#DCDFE4"></div>
<span class="t" style="left:1958.5px;top:1040px;font-size:23.5px;color:#172B4D;letter-spacing:0.4px;-webkit-text-stroke:0.5px #172B4D;transform:scaleX(1.1);transform-origin:0 50%;">36</span>
<span class="ic" style="left:2263.5px;top:1053.3px;width:27.2px;height:16.8px;"><svg width="27.2" height="16.8" viewBox="0 0 27.200 16.800"  xmlns="http://www.w3.org/2000/svg"><path d="M3.200 13.600L11.200 4.800 16.100 10.800 24 3.200" fill="none" stroke="#8590A2" stroke-width="4" stroke-linecap="round" stroke-linejoin="round"/><circle cx="3.200" cy="13.600" r="3.100" fill="#8590A2"/><circle cx="24" cy="3.200" r="3.100" fill="#8590A2"/></svg></span>
<span class="ic" style="left:2506.5px;top:1047.8px;width:30px;height:26.4px;"><svg width="30" height="26.4" viewBox="0 0 30 26.400"  xmlns="http://www.w3.org/2000/svg"><path d="M15 1.800C7.500 1.800 1.800 6.300 1.800 12.300S7.500 22.800 15 22.800c1.700 0 3.400-.3 4.900-.7l5 3.200c.8.500 1.700-.2 1.500-1.100l-1.100-4.300c1.900-1.900 2.900-4.500 2.900-7.600C28.200 6.300 22.500 1.800 15 1.800Z" fill="none" stroke="#8590A2" stroke-width="3.400" stroke-linejoin="round"/><path d="M8.300 10.200h14M8.300 15.300h6.500" stroke="#8590A2" stroke-width="2.800" stroke-linecap="round"/></svg></span>
<div class="cb" style="left:593.4px;top:1131px;"></div>
<span class="t" style="left:650.5px;top:1124.5px;font-size:28px;color:#253858;letter-spacing:0.886px;-webkit-text-stroke:0.25px #253858;">Disposable virtual cards</span>
<div class="tag" style="left:1275.5px;top:1125px;width:213.1px;background:#E9F2FF"></div>
<span class="ic" style="left:1287.3px;top:1129.0px;width:32px;height:32px;"><svg width="32" height="32" viewBox="0 0 32 32"  xmlns="http://www.w3.org/2000/svg"><g transform="translate(16.600 16) rotate(45)">
<rect x="-4.750" y="-15.500" width="9.500" height="31.200" rx="4.750" fill="#8899A6"/>
<rect x="-3.200" y="-14.500" width="6.400" height="28.600" rx="3.200" fill="#CCD6DD"/>
<path d="M-3.200 -7.800C-1.500 -6.200 1 -5 3.200 -1.700V10.900a3.200 3.200 0 0 1-6.400 0Z" fill="#6FE08A"/>
<path d="M-3.200 -7.800C-1.500 -6.200 1 -5 3.200 -1.700 1 -3.700 -1.500 -5.500 -3.200 -6.600Z" fill="#3BC860"/>
<ellipse cx="0" cy="-14.700" rx="5.200" ry="1.700" fill="#8899A6"/>
<ellipse cx="0" cy="-14.700" rx="4" ry="1" fill="#E1E8ED"/>
<circle cx="-.5" cy="9.800" r="1.200" fill="#3BC860"/><circle cx="1" cy="4" r="1" fill="#3BC860"/><circle cx="-1.200" cy="1" r=".7" fill="#3BC860"/><circle cx="1.300" cy="-1" r=".6" fill="#3BC860"/><circle cx="-1" cy="5.500" r=".6" fill="#3BC860"/>
</g></svg></span>
<span class="t" style="left:1331.0px;top:1124px;font-size:23.2px;color:#09326C;letter-spacing:1.307px;-webkit-text-stroke:0.96px #09326C;transform:scaleX(1.06);transform-origin:0 50%;">Differentiate</span>
<div class="tag" style="left:1703.3px;top:1125px;width:69.8px;background:#B8ACF6"></div>
<span class="t" style="left:1711.5px;top:1124px;font-size:23.2px;color:#1C1B4B;letter-spacing:0.3px;-webkit-text-stroke:0.96px #1C1B4B;transform:scaleX(1.06);transform-origin:0 50%;">Now</span>
<div class="tag" style="left:1949.5px;top:1125px;width:93.8px;background:#BAF3DB"></div>
<span class="ic" style="left:1961.5px;top:1129.0px;width:32px;height:32px;"><svg width="32" height="32" viewBox="0 0 32 32"  xmlns="http://www.w3.org/2000/svg"><g transform="translate(19.500 12.500) rotate(45)">
<path d="M0 13C3 14 5 17 4.800 21 4.500 24 2 26 0 27.500-2 26-4.500 24-4.800 21-5 17-3 14 0 13Z" fill="#FFAC33"/>
<path d="M0 14C1.800 15 3 17 2.800 19.500 2.600 21.500 1.200 23 0 24-1.200 23-2.600 21.500-2.800 19.500-3 17-1.800 15 0 14Z" fill="#FFCC4D"/>
<path d="M-5.500 1.500L-10.200 5.200C-11 6-11.500 7-11.500 8L-11.400 15-5 11.500ZM5.500 1.500L10.200 5.200C11 6 11.500 7 11.500 8L11.400 15 5 11.500Z" fill="#A0041E"/>
<path d="M0-17.300C4-13.500 6.600-7 6.500 0 6.400 6 5 11 3.300 14.800H-3.300C-5 11-6.400 6-6.500 0-6.600-7-4-13.500 0-17.300Z" fill="#55ACEE"/>
<path d="M0 1.500C1.300 4 1.900 9 1.600 16H-1.600C-1.900 9-1.300 4 0 1.500Z" fill="#A0041E"/>
<path d="M-3.700-5.200C-2-8.400 2-8.400 3.700-5.200 1.800-7 -1.800-7 -3.700-5.200Z" fill="#111" stroke="#111" stroke-width=".9" stroke-linejoin="round"/>
</g></svg></span>
<span class="t" style="left:2005.5px;top:1124px;font-size:23.5px;color:#164B35;letter-spacing:1.4px;-webkit-text-stroke:0.5px #164B35;transform:scaleX(1.1);transform-origin:0 50%;">79</span>
<span class="ic" style="left:2263.5px;top:1137.3px;width:27.2px;height:16.8px;"><svg width="27.2" height="16.8" viewBox="0 0 27.200 16.800"  xmlns="http://www.w3.org/2000/svg"><path d="M3.200 13.600L11.200 4.800 16.100 10.800 24 3.200" fill="none" stroke="#44546F" stroke-width="4" stroke-linecap="round" stroke-linejoin="round"/><circle cx="3.200" cy="13.600" r="3.100" fill="#44546F"/><circle cx="24" cy="3.200" r="3.100" fill="#44546F"/></svg></span>
<span class="t" style="left:2301.3px;top:1124px;font-size:23.5px;color:#3A4B69;letter-spacing:0.6px;-webkit-text-stroke:0.5px #3A4B69;transform:scaleX(1.1);transform-origin:0 50%;">2</span>
<span class="ic" style="left:2506.5px;top:1131.8px;width:30px;height:26.4px;"><svg width="30" height="26.4" viewBox="0 0 30 26.400"  xmlns="http://www.w3.org/2000/svg"><path d="M15 1.800C7.500 1.800 1.800 6.300 1.800 12.300S7.500 22.800 15 22.800c1.700 0 3.400-.3 4.900-.7l5 3.200c.8.500 1.700-.2 1.500-1.100l-1.100-4.300c1.900-1.900 2.900-4.500 2.900-7.600C28.200 6.300 22.500 1.800 15 1.800Z" fill="none" stroke="#8590A2" stroke-width="3.400" stroke-linejoin="round"/><path d="M8.300 10.200h14M8.300 15.300h6.500" stroke="#8590A2" stroke-width="2.800" stroke-linecap="round"/></svg></span>
<div class="cb" style="left:593.4px;top:1215px;"></div>
<span class="t" style="left:651.5px;top:1208.5px;font-size:28px;color:#253858;letter-spacing:0.807px;-webkit-text-stroke:0.25px #253858;">Gold rewards marketing push</span>
<div class="tag" style="left:1275.5px;top:1209px;width:208.2px;background:#E9F2FF"></div>
<span class="ic" style="left:1287.3px;top:1213.0px;width:32px;height:32px;"><svg width="32" height="32" viewBox="0 0 32 32"  xmlns="http://www.w3.org/2000/svg"><path d="M.9 14.8L5 8.6 9.9 9.500 13.7 5.2 16.8 7.3 19.9 4.8 21.7 8 27.3 8 31.7 14.8 24.8 21.6 24.500 24.1 21.7 26 19.9 27.8 16.1 28.1 11.2 26.9 8.7 24.100 8.100 21.600Z" fill="#FFDC5D" stroke="#FFDC5D" stroke-width="1" stroke-linejoin="round"/>
<path d="M16.8 7.3L19.9 4.8 21.7 8 27.3 8 31.7 14.8 25.5 20.9 17.2 11.2Z" fill="#FFCC4D" stroke="#FFCC4D" stroke-width="1" stroke-linejoin="round"/>
<path d="M17.500 11.500l8 9M15.500 17.500l7.500 5.500M14.200 20l7 5.200M12.700 22.500l6.500 4.700M11 24.800l5.200 3M18.500 9.800l3.500 2.700" stroke="#EF9645" stroke-width="1" fill="none" stroke-linecap="round"/></svg></span>
<span class="t" style="left:1331.0px;top:1208px;font-size:23.2px;color:#09326C;letter-spacing:0.854px;-webkit-text-stroke:0.96px #09326C;transform:scaleX(1.06);transform-origin:0 50%;">Build loyalty</span>
<div class="tag" style="left:1703.3px;top:1209px;width:71.7px;background:#DFD8FD"></div>
<span class="t" style="left:1711.5px;top:1208px;font-size:23.2px;color:#2E2960;letter-spacing:0.864px;-webkit-text-stroke:0.96px #2E2960;transform:scaleX(1.06);transform-origin:0 50%;">Next</span>
<div class="tag" style="left:1949.5px;top:1209px;width:93.8px;background:#F8E6A0"></div>
<span class="ic" style="left:1961.5px;top:1213.0px;width:32px;height:32px;"><svg width="32" height="32" viewBox="0 0 32 32"  xmlns="http://www.w3.org/2000/svg"><circle cx="15.200" cy="16.500" r="16" fill="#CCD6DD"/>
<circle cx="15.200" cy="16.500" r="12.300" fill="#3B88C3"/>
<circle cx="15.200" cy="16.500" r="8.850" fill="#DD2E44"/>
<circle cx="15.200" cy="16.500" r="5.300" fill="#FFAC33"/>
<path d="M20 20C22 19.200 25.500 19.800 29 22 31 23.300 31.400 25 30.200 26.200L27.500 27.800C28.200 30 27.500 31.300 25.800 31.500 23.500 31.500 21 29 19.800 25.500 19.200 23.500 19.200 21.500 20 20Z" fill="#111"/>
<path d="M14.500 15L28 28" stroke="#C1694F" stroke-width="1.100" stroke-linecap="round"/></svg></span>
<span class="t" style="left:2005.5px;top:1208px;font-size:23.5px;color:#533F04;letter-spacing:1.0px;-webkit-text-stroke:0.5px #533F04;transform:scaleX(1.1);transform-origin:0 50%;">75</span>
<span class="ic" style="left:2263.5px;top:1221.3px;width:27.2px;height:16.8px;"><svg width="27.2" height="16.8" viewBox="0 0 27.200 16.800"  xmlns="http://www.w3.org/2000/svg"><path d="M3.200 13.600L11.200 4.800 16.100 10.800 24 3.200" fill="none" stroke="#44546F" stroke-width="4" stroke-linecap="round" stroke-linejoin="round"/><circle cx="3.200" cy="13.600" r="3.100" fill="#44546F"/><circle cx="24" cy="3.200" r="3.100" fill="#44546F"/></svg></span>
<span class="t" style="left:2300.5px;top:1208px;font-size:23.5px;color:#3A4B69;letter-spacing:1.7px;-webkit-text-stroke:0.5px #3A4B69;transform:scaleX(1.1);transform-origin:0 50%;">11</span>
<span class="ic" style="left:2506.5px;top:1215.8px;width:30px;height:26.4px;"><svg width="30" height="26.4" viewBox="0 0 30 26.400"  xmlns="http://www.w3.org/2000/svg"><path d="M15 1.800C7.500 1.800 1.800 6.300 1.800 12.300S7.500 22.800 15 22.800c1.700 0 3.400-.3 4.900-.7l5 3.200c.8.500 1.700-.2 1.500-1.100l-1.100-4.300c1.900-1.900 2.900-4.500 2.900-7.600C28.200 6.300 22.500 1.800 15 1.800Z" fill="none" stroke="#44546F" stroke-width="3.400" stroke-linejoin="round"/><path d="M8.300 10.200h14M8.300 15.300h6.500" stroke="#44546F" stroke-width="2.800" stroke-linecap="round"/></svg></span>
<span class="t" style="left:2546.5px;top:1208px;font-size:23.5px;color:#3A4B69;letter-spacing:0.6px;-webkit-text-stroke:0.5px #3A4B69;transform:scaleX(1.1);transform-origin:0 50%;">3</span>
<div class="cb" style="left:593.4px;top:1299px;"></div>
<span class="t" style="left:650.5px;top:1292.5px;font-size:28px;color:#253858;letter-spacing:1.017px;-webkit-text-stroke:0.25px #253858;">Instant transactions</span>
<div class="tag" style="left:1275.5px;top:1293px;width:220.0px;background:#E9F2FF"></div>
<span class="ic" style="left:1287.3px;top:1297.0px;width:32px;height:32px;"><svg width="32" height="32" viewBox="0 0 32 32"  xmlns="http://www.w3.org/2000/svg"><circle cx="16" cy="16.3" r="15.9" fill="#FFCC4D"/>
<path d="M8.1 19.3C8.1 19.3 11 20.4 16 20.4 21 20.4 23.9 19.3 23.9 19.3 23.9 24 20.5 27.4 16 27.4 11.500 27.4 8.1 24 8.1 19.3Z" fill="#664500"/>
<path d="M0 .92C-.3 .72-1 .2-1-.36-1-.76-.7-.96-.45-.96-.25-.96-.08-.83 0-.66 .08-.83 .25-.96 .45-.96 .7-.96 1-.76 1-.36 1 .2 .3 .72 0 .92Z" fill="#DD2E44" transform="translate(7.8 7.3) rotate(-14) scale(7.5)"/>
<path d="M0 .92C-.3 .72-1 .2-1-.36-1-.76-.7-.96-.45-.96-.25-.96-.08-.83 0-.66 .08-.83 .25-.96 .45-.96 .7-.96 1-.76 1-.36 1 .2 .3 .72 0 .92Z" fill="#DD2E44" transform="translate(24.3 7.3) rotate(14) scale(7.5)"/></svg></span>
<span class="t" style="left:1331.0px;top:1292px;font-size:23.2px;color:#09326C;letter-spacing:0.95px;-webkit-text-stroke:0.96px #09326C;transform:scaleX(1.06);transform-origin:0 50%;">Delight users</span>
<div class="tag" style="left:1703.3px;top:1293px;width:71.7px;background:#DFD8FD"></div>
<span class="t" style="left:1711.5px;top:1292px;font-size:23.2px;color:#2E2960;letter-spacing:0.864px;-webkit-text-stroke:0.96px #2E2960;transform:scaleX(1.06);transform-origin:0 50%;">Next</span>
<div class="tag" style="left:1949.5px;top:1293px;width:93.8px;background:#F8E6A0"></div>
<span class="ic" style="left:1961.5px;top:1297.0px;width:32px;height:32px;"><svg width="32" height="32" viewBox="0 0 32 32"  xmlns="http://www.w3.org/2000/svg"><circle cx="15.200" cy="16.500" r="16" fill="#CCD6DD"/>
<circle cx="15.200" cy="16.500" r="12.300" fill="#3B88C3"/>
<circle cx="15.200" cy="16.500" r="8.850" fill="#DD2E44"/>
<circle cx="15.200" cy="16.500" r="5.300" fill="#FFAC33"/>
<path d="M20 20C22 19.200 25.500 19.800 29 22 31 23.300 31.400 25 30.200 26.200L27.500 27.800C28.200 30 27.500 31.300 25.800 31.500 23.500 31.500 21 29 19.800 25.500 19.200 23.500 19.200 21.500 20 20Z" fill="#111"/>
<path d="M14.500 15L28 28" stroke="#C1694F" stroke-width="1.100" stroke-linecap="round"/></svg></span>
<span class="t" style="left:2005.5px;top:1292px;font-size:23.5px;color:#533F04;letter-spacing:1.4px;-webkit-text-stroke:0.5px #533F04;transform:scaleX(1.1);transform-origin:0 50%;">76</span>
<span class="ic" style="left:2263.5px;top:1305.3px;width:27.2px;height:16.8px;"><svg width="27.2" height="16.8" viewBox="0 0 27.200 16.800"  xmlns="http://www.w3.org/2000/svg"><path d="M3.200 13.600L11.200 4.800 16.100 10.800 24 3.200" fill="none" stroke="#8590A2" stroke-width="4" stroke-linecap="round" stroke-linejoin="round"/><circle cx="3.200" cy="13.600" r="3.100" fill="#8590A2"/><circle cx="24" cy="3.200" r="3.100" fill="#8590A2"/></svg></span>
<span class="ic" style="left:2506.5px;top:1299.8px;width:30px;height:26.4px;"><svg width="30" height="26.4" viewBox="0 0 30 26.400"  xmlns="http://www.w3.org/2000/svg"><path d="M15 1.800C7.500 1.800 1.800 6.300 1.800 12.300S7.500 22.800 15 22.800c1.700 0 3.400-.3 4.900-.7l5 3.200c.8.500 1.700-.2 1.500-1.100l-1.100-4.300c1.900-1.900 2.900-4.500 2.900-7.600C28.200 6.300 22.500 1.800 15 1.800Z" fill="none" stroke="#44546F" stroke-width="3.400" stroke-linejoin="round"/><path d="M8.300 10.200h14M8.300 15.300h6.500" stroke="#44546F" stroke-width="2.800" stroke-linecap="round"/></svg></span>
<span class="t" style="left:2543.7px;top:1292px;font-size:23.5px;color:#3A4B69;letter-spacing:0.6px;-webkit-text-stroke:0.5px #3A4B69;transform:scaleX(1.1);transform-origin:0 50%;">1</span>
<div class="cb" style="left:593.4px;top:1383px;"></div>
<span class="t" style="left:652.5px;top:1376.5px;font-size:28px;color:#253858;letter-spacing:0.787px;-webkit-text-stroke:0.25px #253858;">Automated tasks</span>
<div class="tag" style="left:1275.5px;top:1377px;width:220.0px;background:#E9F2FF"></div>
<span class="ic" style="left:1287.3px;top:1381.0px;width:32px;height:32px;"><svg width="32" height="32" viewBox="0 0 32 32"  xmlns="http://www.w3.org/2000/svg"><circle cx="16" cy="16.3" r="15.9" fill="#FFCC4D"/>
<path d="M8.1 19.3C8.1 19.3 11 20.4 16 20.4 21 20.4 23.9 19.3 23.9 19.3 23.9 24 20.5 27.4 16 27.4 11.500 27.4 8.1 24 8.1 19.3Z" fill="#664500"/>
<path d="M0 .92C-.3 .72-1 .2-1-.36-1-.76-.7-.96-.45-.96-.25-.96-.08-.83 0-.66 .08-.83 .25-.96 .45-.96 .7-.96 1-.76 1-.36 1 .2 .3 .72 0 .92Z" fill="#DD2E44" transform="translate(7.8 7.3) rotate(-14) scale(7.5)"/>
<path d="M0 .92C-.3 .72-1 .2-1-.36-1-.76-.7-.96-.45-.96-.25-.96-.08-.83 0-.66 .08-.83 .25-.96 .45-.96 .7-.96 1-.76 1-.36 1 .2 .3 .72 0 .92Z" fill="#DD2E44" transform="translate(24.3 7.3) rotate(14) scale(7.5)"/></svg></span>
<span class="t" style="left:1331.0px;top:1376px;font-size:23.2px;color:#09326C;letter-spacing:0.95px;-webkit-text-stroke:0.96px #09326C;transform:scaleX(1.06);transform-origin:0 50%;">Delight users</span>
<div class="tag" style="left:1703.3px;top:1377px;width:77.7px;background:#F3F0FF"></div>
<span class="t" style="left:1711.5px;top:1376px;font-size:23.2px;color:#2E2960;letter-spacing:0.85px;-webkit-text-stroke:0.96px #2E2960;transform:scaleX(1.06);transform-origin:0 50%;">Later</span>
<div class="tag" style="left:1949.5px;top:1377px;width:47.7px;background:#FFF3EB"></div>
<span class="t" style="left:1957.5px;top:1376px;font-size:23.5px;color:#5F3811;letter-spacing:2.0px;-webkit-text-stroke:0.5px #5F3811;transform:scaleX(1.1);transform-origin:0 50%;">56</span>
<span class="ic" style="left:2263.5px;top:1389.3px;width:27.2px;height:16.8px;"><svg width="27.2" height="16.8" viewBox="0 0 27.200 16.800"  xmlns="http://www.w3.org/2000/svg"><path d="M3.200 13.600L11.200 4.800 16.100 10.800 24 3.200" fill="none" stroke="#44546F" stroke-width="4" stroke-linecap="round" stroke-linejoin="round"/><circle cx="3.200" cy="13.600" r="3.100" fill="#44546F"/><circle cx="24" cy="3.200" r="3.100" fill="#44546F"/></svg></span>
<span class="t" style="left:2301.3px;top:1376px;font-size:23.5px;color:#172B4D;letter-spacing:0.6px;-webkit-text-stroke:0.5px #172B4D;transform:scaleX(1.1);transform-origin:0 50%;">29</span>
<span class="ic" style="left:2506.5px;top:1383.8px;width:30px;height:26.4px;"><svg width="30" height="26.4" viewBox="0 0 30 26.400"  xmlns="http://www.w3.org/2000/svg"><path d="M15 1.800C7.500 1.800 1.800 6.300 1.800 12.300S7.500 22.800 15 22.800c1.700 0 3.400-.3 4.900-.7l5 3.200c.8.500 1.700-.2 1.500-1.100l-1.100-4.300c1.900-1.900 2.900-4.500 2.900-7.600C28.200 6.300 22.500 1.800 15 1.800Z" fill="none" stroke="#8590A2" stroke-width="3.400" stroke-linejoin="round"/><path d="M8.300 10.200h14M8.300 15.300h6.500" stroke="#8590A2" stroke-width="2.800" stroke-linecap="round"/></svg></span>
<div class="cb" style="left:593.4px;top:1467px;"></div>
<span class="t" style="left:651.5px;top:1460.5px;font-size:28px;color:#253858;letter-spacing:0.501px;-webkit-text-stroke:0.25px #253858;">QR payment links</span>
<div class="tag" style="left:1275.5px;top:1461px;width:213.1px;background:#E9F2FF"></div>
<span class="ic" style="left:1287.3px;top:1465.0px;width:32px;height:32px;"><svg width="32" height="32" viewBox="0 0 32 32"  xmlns="http://www.w3.org/2000/svg"><g transform="translate(16.600 16) rotate(45)">
<rect x="-4.750" y="-15.500" width="9.500" height="31.200" rx="4.750" fill="#8899A6"/>
<rect x="-3.200" y="-14.500" width="6.400" height="28.600" rx="3.200" fill="#CCD6DD"/>
<path d="M-3.200 -7.800C-1.500 -6.200 1 -5 3.200 -1.700V10.900a3.200 3.200 0 0 1-6.400 0Z" fill="#6FE08A"/>
<path d="M-3.200 -7.800C-1.500 -6.200 1 -5 3.200 -1.700 1 -3.700 -1.500 -5.500 -3.200 -6.600Z" fill="#3BC860"/>
<ellipse cx="0" cy="-14.700" rx="5.200" ry="1.700" fill="#8899A6"/>
<ellipse cx="0" cy="-14.700" rx="4" ry="1" fill="#E1E8ED"/>
<circle cx="-.5" cy="9.800" r="1.200" fill="#3BC860"/><circle cx="1" cy="4" r="1" fill="#3BC860"/><circle cx="-1.200" cy="1" r=".7" fill="#3BC860"/><circle cx="1.300" cy="-1" r=".6" fill="#3BC860"/><circle cx="-1" cy="5.500" r=".6" fill="#3BC860"/>
</g></svg></span>
<span class="t" style="left:1331.0px;top:1460px;font-size:23.2px;color:#09326C;letter-spacing:1.307px;-webkit-text-stroke:0.96px #09326C;transform:scaleX(1.06);transform-origin:0 50%;">Differentiate</span>
<div class="tag" style="left:1703.3px;top:1461px;width:77.7px;background:#F3F0FF"></div>
<span class="t" style="left:1711.5px;top:1460px;font-size:23.2px;color:#2E2960;letter-spacing:0.85px;-webkit-text-stroke:0.96px #2E2960;transform:scaleX(1.06);transform-origin:0 50%;">Later</span>
<div class="tag" style="left:1949.5px;top:1461px;width:50px;background:#FFF3EB"></div>
<span class="t" style="left:1958.5px;top:1460px;font-size:23.5px;color:#5F3811;letter-spacing:2.0px;-webkit-text-stroke:0.5px #5F3811;transform:scaleX(1.1);transform-origin:0 50%;">46</span>
<span class="ic" style="left:2263.5px;top:1473.3px;width:27.2px;height:16.8px;"><svg width="27.2" height="16.8" viewBox="0 0 27.200 16.800"  xmlns="http://www.w3.org/2000/svg"><path d="M3.200 13.600L11.200 4.800 16.100 10.800 24 3.200" fill="none" stroke="#8590A2" stroke-width="4" stroke-linecap="round" stroke-linejoin="round"/><circle cx="3.200" cy="13.600" r="3.100" fill="#8590A2"/><circle cx="24" cy="3.200" r="3.100" fill="#8590A2"/></svg></span>
<span class="ic" style="left:2506.5px;top:1467.8px;width:30px;height:26.4px;"><svg width="30" height="26.4" viewBox="0 0 30 26.400"  xmlns="http://www.w3.org/2000/svg"><path d="M15 1.800C7.500 1.800 1.800 6.300 1.800 12.300S7.500 22.800 15 22.800c1.700 0 3.400-.3 4.900-.7l5 3.200c.8.500 1.700-.2 1.500-1.100l-1.100-4.300c1.900-1.900 2.900-4.500 2.900-7.600C28.200 6.300 22.500 1.800 15 1.800Z" fill="none" stroke="#44546F" stroke-width="3.400" stroke-linejoin="round"/><path d="M8.300 10.200h14M8.300 15.300h6.500" stroke="#44546F" stroke-width="2.800" stroke-linecap="round"/></svg></span>
<span class="t" style="left:2546.5px;top:1460px;font-size:23.5px;color:#3A4B69;letter-spacing:1.2px;-webkit-text-stroke:0.5px #3A4B69;transform:scaleX(1.1);transform-origin:0 50%;">48</span>
<div class="cb" style="left:593.4px;top:1551px;"></div>
<span class="t" style="left:650.5px;top:1544.5px;font-size:28px;color:#253858;letter-spacing:0.838px;-webkit-text-stroke:0.25px #253858;">Managed investment</span>
<div class="tag" style="left:1275.5px;top:1545px;width:228.5px;background:#E9F2FF"></div>
<span class="ic" style="left:1287.3px;top:1549.0px;width:32px;height:32px;"><svg width="32" height="32" viewBox="0 0 32 32"  xmlns="http://www.w3.org/2000/svg"><path d="M16.800 1.300C22.500 1.300 27 9.500 27 18 27 26 22.500 31.300 16.800 31.300 11 31.300 6.200 26 6.200 18 6.200 9.500 11 1.300 16.800 1.300Z" fill="#E0AA94"/>
<path d="M16 1.200C21.600 1.200 26 9.300 26 17.300 26 25 21.600 29.800 16 29.800 10.300 29.800 5.700 25 5.700 17.300 5.700 9.300 10.300 1.200 16 1.200Z" fill="#F7DECE"/></svg></span>
<span class="t" style="left:1331.0px;top:1544px;font-size:23.2px;color:#09326C;letter-spacing:1.11px;-webkit-text-stroke:0.96px #09326C;transform:scaleX(1.06);transform-origin:0 50%;">New products</span>
<div class="tag" style="left:1703.3px;top:1545px;width:77.7px;background:#F3F0FF"></div>
<span class="t" style="left:1711.5px;top:1544px;font-size:23.2px;color:#2E2960;letter-spacing:0.85px;-webkit-text-stroke:0.96px #2E2960;transform:scaleX(1.06);transform-origin:0 50%;">Later</span>
<div class="tag" style="left:1949.5px;top:1545px;width:47.7px;background:#FFF3EB"></div>
<span class="t" style="left:1958.5px;top:1544px;font-size:23.5px;color:#5F3811;letter-spacing:0.4px;-webkit-text-stroke:0.5px #5F3811;transform:scaleX(1.1);transform-origin:0 50%;">36</span>
<span class="ic" style="left:2263.5px;top:1557.3px;width:27.2px;height:16.8px;"><svg width="27.2" height="16.8" viewBox="0 0 27.200 16.800"  xmlns="http://www.w3.org/2000/svg"><path d="M3.200 13.600L11.200 4.800 16.100 10.800 24 3.200" fill="none" stroke="#8590A2" stroke-width="4" stroke-linecap="round" stroke-linejoin="round"/><circle cx="3.200" cy="13.600" r="3.100" fill="#8590A2"/><circle cx="24" cy="3.200" r="3.100" fill="#8590A2"/></svg></span>
<span class="ic" style="left:2506.5px;top:1551.8px;width:30px;height:26.4px;"><svg width="30" height="26.4" viewBox="0 0 30 26.400"  xmlns="http://www.w3.org/2000/svg"><path d="M15 1.800C7.500 1.800 1.800 6.300 1.800 12.300S7.500 22.800 15 22.800c1.700 0 3.400-.3 4.900-.7l5 3.200c.8.500 1.700-.2 1.500-1.100l-1.100-4.300c1.900-1.900 2.900-4.500 2.900-7.600C28.200 6.300 22.500 1.800 15 1.800Z" fill="none" stroke="#8590A2" stroke-width="3.400" stroke-linejoin="round"/><path d="M8.300 10.200h14M8.300 15.300h6.500" stroke="#8590A2" stroke-width="2.800" stroke-linecap="round"/></svg></span>
<div class="side"></div>
<div style="position:absolute;left:0px;top:369px;width:478px;height:80px;background:#E9EBEE;z-index:3"></div>
<div style="position:absolute;left:0;top:0;z-index:4">
<span class="ic" style="left:31.7px;top:177.0px;width:64px;height:64px;"><svg width="64" height="64" viewBox="0 0 64 64"  xmlns="http://www.w3.org/2000/svg"><defs><clipPath id="pac"><rect width="64" height="64" rx="6.500"/></clipPath></defs>
<g clip-path="url(#pac)"><rect width="64" height="64" fill="#4BC4C4"/>
<rect x="17.700" y="44" width="3.600" height="11" rx="1.200" fill="#5E35A5"/><rect x="41.800" y="44" width="3.600" height="11" rx="1.200" fill="#5E35A5"/>
<ellipse cx="31.800" cy="37" rx="25.200" ry="14.600" fill="#5E35A5"/>
<ellipse cx="31.800" cy="35" rx="25.200" ry="13.600" fill="#7E4BC0"/>
<path d="M15.800 37.500V22.500a15.200 15.200 0 0 1 30.400 0V37.500C40 40.500 22 40.500 15.800 37.500Z" fill="#fff"/>
<path d="M15.800 37.500V27C20 24 44 24 46.200 27V37.500C40 40.500 22 40.500 15.800 37.500Z" fill="#E6DCF5"/>
<path d="M22.500 39V23.500a8.750 8.750 0 0 1 17.500 0V39C36 40.300 27 40.300 22.500 39Z" fill="#56A4E3"/>
<circle cx="31.500" cy="25.200" r="5.200" fill="#fff"/><circle cx="31.500" cy="25.200" r="2.300" fill="#253858"/>
</g></svg></span>
<span class="t" style="left:129.5px;top:173.5px;font-size:27.0px;color:#44546F;letter-spacing:0.72px;-webkit-text-stroke:1.12px #44546F;transform:scaleX(1.06);transform-origin:0 50%;">Awesome app</span>
<span class="t" style="left:126.5px;top:203.5px;font-size:22.5px;color:#626F86;letter-spacing:0.514px;">Discovery project</span>
<span class="t" style="left:33.0px;top:308.5px;font-size:22.8px;color:#44546F;letter-spacing:0.7px;-webkit-text-stroke:1.15px #44546F;">VIEWS</span>
<span class="ic" style="left:411.0px;top:317.0px;width:24px;height:24px;"><svg width="24" height="24" viewBox="0 0 24 24"  xmlns="http://www.w3.org/2000/svg"><path d="M12.0 2.1V21.9M2.1 12.0H21.9" stroke="#44546F" stroke-width="4.2" stroke-linecap="round"/></svg></span>
<span class="ic" style="left:40.9px;top:396.7px;width:30.2px;height:25.4px;"><svg width="30.2" height="25.4" viewBox="0 0 30.200 25.400"  xmlns="http://www.w3.org/2000/svg"><circle cx="2.700" cy="2.8" r="2.700" fill="#0C66E4"/><rect x="10.400" y="0.0" width="19.600" height="5.600" rx="2.800" fill="#0C66E4"/><circle cx="2.700" cy="12.7" r="2.700" fill="#0C66E4"/><rect x="10.400" y="9.9" width="19.600" height="5.600" rx="2.800" fill="#0C66E4"/><circle cx="2.700" cy="22.6" r="2.700" fill="#0C66E4"/><rect x="10.400" y="19.8" width="19.600" height="5.600" rx="2.800" fill="#0C66E4"/></svg></span>
<span class="t" style="left:97.0px;top:389.5px;font-size:28px;color:#0C66E4;letter-spacing:0.522px;-webkit-text-stroke:0.2px #0C66E4;">All ideas</span>
<span class="ic" style="left:40.9px;top:476.7px;width:30.2px;height:25.4px;"><svg width="30.2" height="25.4" viewBox="0 0 30.200 25.400"  xmlns="http://www.w3.org/2000/svg"><circle cx="2.700" cy="2.8" r="2.700" fill="#44546F"/><rect x="10.400" y="0.0" width="19.600" height="5.600" rx="2.800" fill="#44546F"/><circle cx="2.700" cy="12.7" r="2.700" fill="#44546F"/><rect x="10.400" y="9.9" width="19.600" height="5.600" rx="2.800" fill="#44546F"/><circle cx="2.700" cy="22.6" r="2.700" fill="#44546F"/><rect x="10.400" y="19.8" width="19.600" height="5.600" rx="2.800" fill="#44546F"/></svg></span>
<span class="t" style="left:96.0px;top:469.5px;font-size:28px;color:#172B4D;letter-spacing:0.823px;-webkit-text-stroke:0.2px #172B4D;">Impact assesment</span>
<span class="ic" style="left:41.0px;top:554.1px;width:30px;height:29.8px;"><svg width="30" height="29.8" viewBox="0 0 30 29.800"  xmlns="http://www.w3.org/2000/svg"><path d="M2.200 2.200v21.400a4 4 0 0 0 4 4h21.600" fill="none" stroke="#44546F" stroke-width="4.300" stroke-linecap="round"/><circle cx="11.600" cy="7.200" r="3.600" fill="#44546F"/><circle cx="16.200" cy="19.500" r="3" fill="#44546F"/><circle cx="24.800" cy="13.300" r="1.900" fill="#44546F"/></svg></span>
<span class="t" style="left:96.0px;top:549.5px;font-size:28px;color:#172B4D;letter-spacing:0.98px;-webkit-text-stroke:0.2px #172B4D;">Impact vs Effort</span>
<span class="ic" style="left:41.0px;top:637.2px;width:30px;height:23.8px;"><svg width="30" height="23.8" viewBox="0 0 30 23.800"  xmlns="http://www.w3.org/2000/svg"><rect x="1.500" y="1.500" width="27" height="20.800" rx="2.200" fill="none" stroke="#44546F" stroke-width="3"/><path d="M10.700 1.500v20.800M19.300 1.500v20.800" stroke="#44546F" stroke-width="2.600"/></svg></span>
<span class="t" style="left:96.0px;top:629.5px;font-size:28px;color:#172B4D;letter-spacing:0.94px;-webkit-text-stroke:0.2px #172B4D;">Product roadmap</span>
<span class="ic" style="left:40.0px;top:715.0px;width:32px;height:28px;"><svg width="32" height="28" viewBox="0 0 32 28"  xmlns="http://www.w3.org/2000/svg"><path d="M2 2h20M6 10h22M4 18h20M10 26h20" stroke="#44546F" stroke-width="4" stroke-linecap="round"/></svg></span>
<span class="t" style="left:96.0px;top:709.5px;font-size:28px;color:#172B4D;letter-spacing:1.022px;-webkit-text-stroke:0.2px #172B4D;">Product timeline</span>
<span class="ic" style="left:40.5px;top:794.1px;width:29.8px;height:29.8px;"><svg width="29.8" height="29.8" viewBox="0 0 29.8 29.8"  xmlns="http://www.w3.org/2000/svg"><path d="M14.9 2.5V27.3M2.5 14.9H27.3" stroke="#44546F" stroke-width="5" stroke-linecap="round"/></svg></span>
<span class="t" style="left:96.0px;top:789.5px;font-size:28px;color:#172B4D;letter-spacing:0.431px;-webkit-text-stroke:0.2px #172B4D;">Create a view</span>
<span class="ic" style="left:44.3px;top:925.0px;width:24px;height:24px;"><svg width="24" height="24" viewBox="0 0 24 24"  xmlns="http://www.w3.org/2000/svg"><rect x="0" y="2.800" width="24" height="4.400" rx="2" fill="#44546F"/><path d="M7.500 3.500c.3-2.300 1.900-3.500 4.500-3.500s4.200 1.200 4.500 3.500z" fill="#44546F"/><path d="M2 9.200h20l-2.100 12.600a2.700 2.700 0 0 1-2.700 2.200h-10.400a2.700 2.700 0 0 1-2.700-2.200z" fill="#44546F"/></svg></span>
<span class="t" style="left:98.1px;top:917.5px;font-size:28px;color:#172B4D;letter-spacing:0.604px;-webkit-text-stroke:0.2px #172B4D;">Archive</span>
<span class="ic" style="left:41.3px;top:1002.2px;width:30px;height:30px;"><svg width="30" height="30" viewBox="0 0 30 30"  xmlns="http://www.w3.org/2000/svg"><path d="M-3.500 -10.500L-2.600 -14.100h5.200L3.500 -10.500Z" fill="#44546F" stroke="#44546F" stroke-width=".8" stroke-linejoin="round" transform="translate(15 15) rotate(0)"/><path d="M-3.500 -10.500L-2.600 -14.100h5.200L3.500 -10.500Z" fill="#44546F" stroke="#44546F" stroke-width=".8" stroke-linejoin="round" transform="translate(15 15) rotate(45)"/><path d="M-3.500 -10.500L-2.600 -14.100h5.200L3.500 -10.500Z" fill="#44546F" stroke="#44546F" stroke-width=".8" stroke-linejoin="round" transform="translate(15 15) rotate(90)"/><path d="M-3.500 -10.500L-2.600 -14.100h5.200L3.500 -10.500Z" fill="#44546F" stroke="#44546F" stroke-width=".8" stroke-linejoin="round" transform="translate(15 15) rotate(135)"/><path d="M-3.500 -10.500L-2.600 -14.100h5.200L3.500 -10.500Z" fill="#44546F" stroke="#44546F" stroke-width=".8" stroke-linejoin="round" transform="translate(15 15) rotate(180)"/><path d="M-3.500 -10.500L-2.600 -14.100h5.200L3.500 -10.500Z" fill="#44546F" stroke="#44546F" stroke-width=".8" stroke-linejoin="round" transform="translate(15 15) rotate(225)"/><path d="M-3.500 -10.500L-2.600 -14.100h5.200L3.500 -10.500Z" fill="#44546F" stroke="#44546F" stroke-width=".8" stroke-linejoin="round" transform="translate(15 15) rotate(270)"/><path d="M-3.500 -10.500L-2.600 -14.100h5.200L3.500 -10.500Z" fill="#44546F" stroke="#44546F" stroke-width=".8" stroke-linejoin="round" transform="translate(15 15) rotate(315)"/><circle cx="15" cy="15" r="9.100" fill="none" stroke="#44546F" stroke-width="5"/></svg></span>
<span class="t" style="left:96.0px;top:997.5px;font-size:28px;color:#172B4D;letter-spacing:1.052px;-webkit-text-stroke:0.2px #172B4D;">Project settings</span>
<span class="ic" style="left:35.7px;top:1125.5px;width:39px;height:39px;"><svg width="39" height="39" viewBox="0 0 39 39"  xmlns="http://www.w3.org/2000/svg"><path d="M2 22.500L20 7l5 17.500-21 3a2.500 2.500 0 0 1-2-5z" fill="#44546F"/><path d="M9 30l3 7" stroke="#44546F" stroke-width="4.500" stroke-linecap="round"/><path d="M27 6l4-4.500M30 13l5.500-2.500M31.500 19.500l5.500 1.500" stroke="#44546F" stroke-width="4" stroke-linecap="round"/></svg></span>
<span class="t" style="left:97.1px;top:1125.5px;font-size:28px;color:#172B4D;letter-spacing:0.582px;-webkit-text-stroke:0.2px #172B4D;">Give feedback</span>
<div style="position:absolute;left:16px;top:869px;width:447px;height:4px;background:#D8DBE2;border-radius:2px"></div>
<div style="position:absolute;left:16px;top:1077px;width:447px;height:4px;background:#D8DBE2;border-radius:2px"></div>
</div>
<div class="nav">
<span class="ic" style="left:44.0px;top:40.0px;width:32px;height:32px;"><svg width="32" height="32" viewBox="0 0 32 32"  xmlns="http://www.w3.org/2000/svg"><rect x="0" y="0" width="8" height="8" rx="2" fill="#44546F"/><rect x="12" y="0" width="8" height="8" rx="2" fill="#44546F"/><rect x="24" y="0" width="8" height="8" rx="2" fill="#44546F"/><rect x="0" y="12" width="8" height="8" rx="2" fill="#44546F"/><rect x="12" y="12" width="8" height="8" rx="2" fill="#44546F"/><rect x="24" y="12" width="8" height="8" rx="2" fill="#44546F"/><rect x="0" y="24" width="8" height="8" rx="2" fill="#44546F"/><rect x="12" y="24" width="8" height="8" rx="2" fill="#44546F"/><rect x="24" y="24" width="8" height="8" rx="2" fill="#44546F"/></svg></span>
<span class="ic" style="left:104.05px;top:35.65px;width:38.5px;height:38.5px;"><svg width="38.5" height="38.5" viewBox="0 0 24 24"  xmlns="http://www.w3.org/2000/svg"><defs>
<linearGradient id="jg1" x1="0.9" y1="0.1" x2="0.4" y2="0.62"><stop offset="0.18" stop-color="#0052CC"/><stop offset="1" stop-color="#2684FF"/></linearGradient>
</defs>
<path fill="#2684FF" d="M23.013 0H11.455a5.215 5.215 0 0 0 5.215 5.215h2.129v2.057A5.215 5.215 0 0 0 24 12.483V1.005A1.001 1.001 0 0 0 23.013 0Z"/>
<path fill="url(#jg1)" d="M17.294 5.757H5.736a5.215 5.215 0 0 0 5.215 5.214h2.129v2.058a5.218 5.218 0 0 0 5.215 5.214V6.758a1.001 1.001 0 0 0-1.001-1.001z"/>
<path fill="url(#jg1)" d="M11.571 11.513H0a5.218 5.218 0 0 0 5.232 5.215h2.13v2.057A5.215 5.215 0 0 0 12.575 24V12.518a1.005 1.005 0 0 0-1.005-1.005z"/></svg></span>
<span class="t" style="left:152.5px;top:37px;font-size:42.5px;color:#172B4D;letter-spacing:-0.755px;-webkit-text-stroke:0.5px #172B4D;height:56px;line-height:56px;margin-top:-8px;">Jira</span>
<span class="t" style="left:282.5px;top:36.5px;font-size:28px;color:#44546F;letter-spacing:1.2px;-webkit-text-stroke:0.3px #44546F;">Your work</span>
<span class="ic" style="left:429.8px;top:52.0px;width:17px;height:11px;"><svg width="20" height="12" viewBox="0 0 20 12"  xmlns="http://www.w3.org/2000/svg"><path d="M3 2.5l7 7 7-7" fill="none" stroke="#8590A2" stroke-width="4" stroke-linecap="round" stroke-linejoin="round"/></svg></span>
<span class="t" style="left:492.5px;top:36.5px;font-size:28px;color:#44546F;letter-spacing:1.634px;-webkit-text-stroke:0.3px #44546F;">Projects</span>
<span class="ic" style="left:617.5px;top:52.0px;width:17px;height:11px;"><svg width="20" height="12" viewBox="0 0 20 12"  xmlns="http://www.w3.org/2000/svg"><path d="M3 2.5l7 7 7-7" fill="none" stroke="#8590A2" stroke-width="4" stroke-linecap="round" stroke-linejoin="round"/></svg></span>
<span class="t" style="left:680.5px;top:36.5px;font-size:28px;color:#44546F;letter-spacing:1.563px;-webkit-text-stroke:0.3px #44546F;">Filters</span>
<span class="ic" style="left:777.7px;top:52.0px;width:17px;height:11px;"><svg width="20" height="12" viewBox="0 0 20 12"  xmlns="http://www.w3.org/2000/svg"><path d="M3 2.5l7 7 7-7" fill="none" stroke="#8590A2" stroke-width="4" stroke-linecap="round" stroke-linejoin="round"/></svg></span>
<span class="t" style="left:841.0px;top:36.5px;font-size:28px;color:#44546F;letter-spacing:1.336px;-webkit-text-stroke:0.3px #44546F;">Dashboards</span>
<span class="ic" style="left:1017.5px;top:52.0px;width:17px;height:11px;"><svg width="20" height="12" viewBox="0 0 20 12"  xmlns="http://www.w3.org/2000/svg"><path d="M3 2.5l7 7 7-7" fill="none" stroke="#8590A2" stroke-width="4" stroke-linecap="round" stroke-linejoin="round"/></svg></span>
<span class="t" style="left:1083.0px;top:36.5px;font-size:28px;color:#44546F;letter-spacing:0.9px;-webkit-text-stroke:0.3px #44546F;">Teams</span>
<span class="ic" style="left:1181.8px;top:52.0px;width:17px;height:11px;"><svg width="20" height="12" viewBox="0 0 20 12"  xmlns="http://www.w3.org/2000/svg"><path d="M3 2.5l7 7 7-7" fill="none" stroke="#8590A2" stroke-width="4" stroke-linecap="round" stroke-linejoin="round"/></svg></span>
<span class="t" style="left:1245.5px;top:36.5px;font-size:28px;color:#44546F;letter-spacing:0.75px;-webkit-text-stroke:0.3px #44546F;">Plans</span>
<span class="ic" style="left:1331.3px;top:52.0px;width:17px;height:11px;"><svg width="20" height="12" viewBox="0 0 20 12"  xmlns="http://www.w3.org/2000/svg"><path d="M3 2.5l7 7 7-7" fill="none" stroke="#8590A2" stroke-width="4" stroke-linecap="round" stroke-linejoin="round"/></svg></span>
<span class="t" style="left:1397.0px;top:36.5px;font-size:28px;color:#44546F;letter-spacing:1.363px;-webkit-text-stroke:0.3px #44546F;">Apps</span>
<span class="ic" style="left:1477.7px;top:52.0px;width:17px;height:11px;"><svg width="20" height="12" viewBox="0 0 20 12"  xmlns="http://www.w3.org/2000/svg"><path d="M3 2.5l7 7 7-7" fill="none" stroke="#8590A2" stroke-width="4" stroke-linecap="round" stroke-linejoin="round"/></svg></span>
<div style="position:absolute;left:486px;top:106px;width:156px;height:6px;background:#0052CC;border-radius:2px 2px 0 0"></div>
<div class="btn pri" style="left:1542px;top:24px;width:140px;"></div>
<span class="t" style="left:1567.0px;top:35.5px;font-size:28px;color:#fff;letter-spacing:1.06px;-webkit-text-stroke:0.3px #fff;">Create</span>
<div style="position:absolute;left:2008px;top:22px;width:479px;height:68px;border:4px solid #DFE1E6;border-radius:10px;background:#fff"></div>
<span class="ic" style="left:2029.5px;top:41.5px;width:29px;height:29px;"><svg width="29" height="29" viewBox="0 0 32 32"  xmlns="http://www.w3.org/2000/svg"><circle cx="14" cy="14" r="10" fill="none" stroke="#44546F" stroke-width="3.9"/><path d="M21.5 21.5l7 7" stroke="#44546F" stroke-width="3.9" stroke-linecap="round"/></svg></span>
<span class="t" style="left:2071.5px;top:35.0px;font-size:28px;color:#626F86;letter-spacing:1.26px;">Search</span>
<span class="ic" style="left:2520.0px;top:36.0px;width:40px;height:40px;"><svg width="40" height="40" viewBox="0 0 40 40" style="overflow:visible" xmlns="http://www.w3.org/2000/svg"><g transform="translate(23.200 16.400) rotate(44) scale(1.050) translate(0 2.750)"><path d="M0 -16.500c1.200 0 2.100 .9 2.100 2v.6c5 1 8.200 5.200 8.200 10.800v6.500l2.600 5.500c.5 1-.2 2.100-1.400 2.100h-23c-1.200 0-1.900-1.100-1.400-2.100l2.600-5.500v-6.500c0-5.600 3.200-9.800 8.200-10.800v-.6c0-1.100 .9-2 2.100-2z" fill="#44546F"/><path d="M-4.300 12.700h8.600c0 2.400-1.900 3.900-4.300 3.900s-4.300-1.500-4.300-3.900z" fill="#44546F"/></g></svg></span>
<span class="ic" style="left:2600.0px;top:36.0px;width:40px;height:40px;"><svg width="40" height="40" viewBox="0 0 40 40"  xmlns="http://www.w3.org/2000/svg"><circle cx="20" cy="20" r="20" fill="#44546F"/><path d="M14.500 15.500a5.500 5.500 0 1 1 8 4.900c-1.500.8-2.500 1.600-2.500 3.600" fill="none" stroke="#fff" stroke-width="4" stroke-linecap="round"/><circle cx="20" cy="30" r="2.500" fill="#fff"/></svg></span>
<span class="ic" style="left:2680.4px;top:36.2px;width:38.4px;height:38.4px;"><svg width="38.4" height="38.4" viewBox="0 0 40 40"  xmlns="http://www.w3.org/2000/svg"><path d="M-4.600 -13.500L-3.300 -17.600h6.600L4.600 -13.500Z" fill="#44546F" stroke="#44546F" stroke-width="1.200" stroke-linejoin="round" transform="translate(20 20) rotate(22.5)"/><path d="M-4.600 -13.500L-3.300 -17.600h6.600L4.600 -13.500Z" fill="#44546F" stroke="#44546F" stroke-width="1.200" stroke-linejoin="round" transform="translate(20 20) rotate(67.5)"/><path d="M-4.600 -13.500L-3.300 -17.600h6.600L4.600 -13.500Z" fill="#44546F" stroke="#44546F" stroke-width="1.200" stroke-linejoin="round" transform="translate(20 20) rotate(112.5)"/><path d="M-4.600 -13.500L-3.300 -17.600h6.600L4.600 -13.500Z" fill="#44546F" stroke="#44546F" stroke-width="1.200" stroke-linejoin="round" transform="translate(20 20) rotate(157.5)"/><path d="M-4.600 -13.500L-3.300 -17.600h6.600L4.600 -13.500Z" fill="#44546F" stroke="#44546F" stroke-width="1.200" stroke-linejoin="round" transform="translate(20 20) rotate(202.5)"/><path d="M-4.600 -13.500L-3.300 -17.600h6.600L4.600 -13.500Z" fill="#44546F" stroke="#44546F" stroke-width="1.200" stroke-linejoin="round" transform="translate(20 20) rotate(247.5)"/><path d="M-4.600 -13.500L-3.300 -17.600h6.600L4.600 -13.500Z" fill="#44546F" stroke="#44546F" stroke-width="1.200" stroke-linejoin="round" transform="translate(20 20) rotate(292.5)"/><path d="M-4.600 -13.500L-3.300 -17.600h6.600L4.600 -13.500Z" fill="#44546F" stroke="#44546F" stroke-width="1.200" stroke-linejoin="round" transform="translate(20 20) rotate(337.5)"/><circle cx="20" cy="20" r="12.700" fill="none" stroke="#44546F" stroke-width="4.600"/></svg></span>
<span class="ic" style="left:2768.0px;top:24.0px;width:64px;height:64px;"><svg width="64" height="64" viewBox="0 0 64 64"  xmlns="http://www.w3.org/2000/svg"><defs><clipPath id="avc"><circle cx="32" cy="32" r="32"/></clipPath>
<filter id="avb" x="-10%" y="-10%" width="120%" height="120%"><feGaussianBlur stdDeviation="1.100"/></filter>
<filter id="avb2" x="-10%" y="-10%" width="120%" height="120%"><feGaussianBlur stdDeviation=".600"/></filter></defs>
<g clip-path="url(#avc)">
<rect width="64" height="64" fill="#D9D3CB"/>
<g filter="url(#avb)">
<path d="M48 6c8 4 14 12 16 24v10L54 36z" fill="#E4E0DB"/>
<path d="M2 70C-2 44 4 10 30 5.500 52 5 62 30 61 70Z" fill="#B89B69"/>
<path d="M10 66C7 44 12 16 30 9 24 22 19 42 21 66Z" fill="#C9AE7A"/>
<path d="M44 13C54 22 58 44 55 66L46 64C49 46 48 28 44 13Z" fill="#C4A872"/>
<path d="M17 50c-2 6-2 12 0 18h10L24 54z" fill="#8C6C44"/>
<path d="M44 52c2 5 2 11 1 16H36l4-12z" fill="#94744A"/>
<path d="M22 52h20v16H22z" fill="#D39E78"/>
<path d="M15.500 33C15.500 20 22 11 32 11s16.500 9 16.500 22c0 13-7 24-16.500 24S15.500 46 15.500 33Z" fill="#DFA982"/>
<path d="M19 30c0 9 5 21 13 24-6 1-13-4-15.500-14C15 32 16 27 19 30Z" fill="#D29A72"/>
<path d="M14 30C15 17 22 8 32 7.500 42 8 49 16 50 30 47 21 42 15.500 35 14 28 15 19 20 14 30Z" fill="#BFA06A"/>
<path d="M31 8c-8 3-14 11-16 24-1-12 4-22 16-24z" fill="#D2B988"/>
</g>
<g filter="url(#avb2)">
<ellipse cx="24.700" cy="31.500" rx="3" ry="1.500" fill="#6A5A55"/><ellipse cx="39.600" cy="31.500" rx="3" ry="1.500" fill="#6A5A55"/>
<path d="M20.500 28.200q4-2 8 0M35.500 28.200q4-2 8 0" stroke="#A98258" stroke-width="1.100" fill="none"/>
<path d="M29.500 41.500q2.700 1.300 5.400 0" stroke="#B97F60" stroke-width="1.200" fill="none"/>
<path d="M26.500 46.800q5.700 1.800 11.500 0-1.500 2.800-5.700 3-4.300-.2-5.800-3z" fill="#EADBD0"/>
<path d="M25 46.300q7.200 2.400 14.500 0" stroke="#B3705C" stroke-width="1.300" fill="none"/>
<path d="M27 50q5.200 2 10.500 0" stroke="#C98A72" stroke-width="1" fill="none"/>
</g>
</g></svg></span>
</div>
</div></body></html>
